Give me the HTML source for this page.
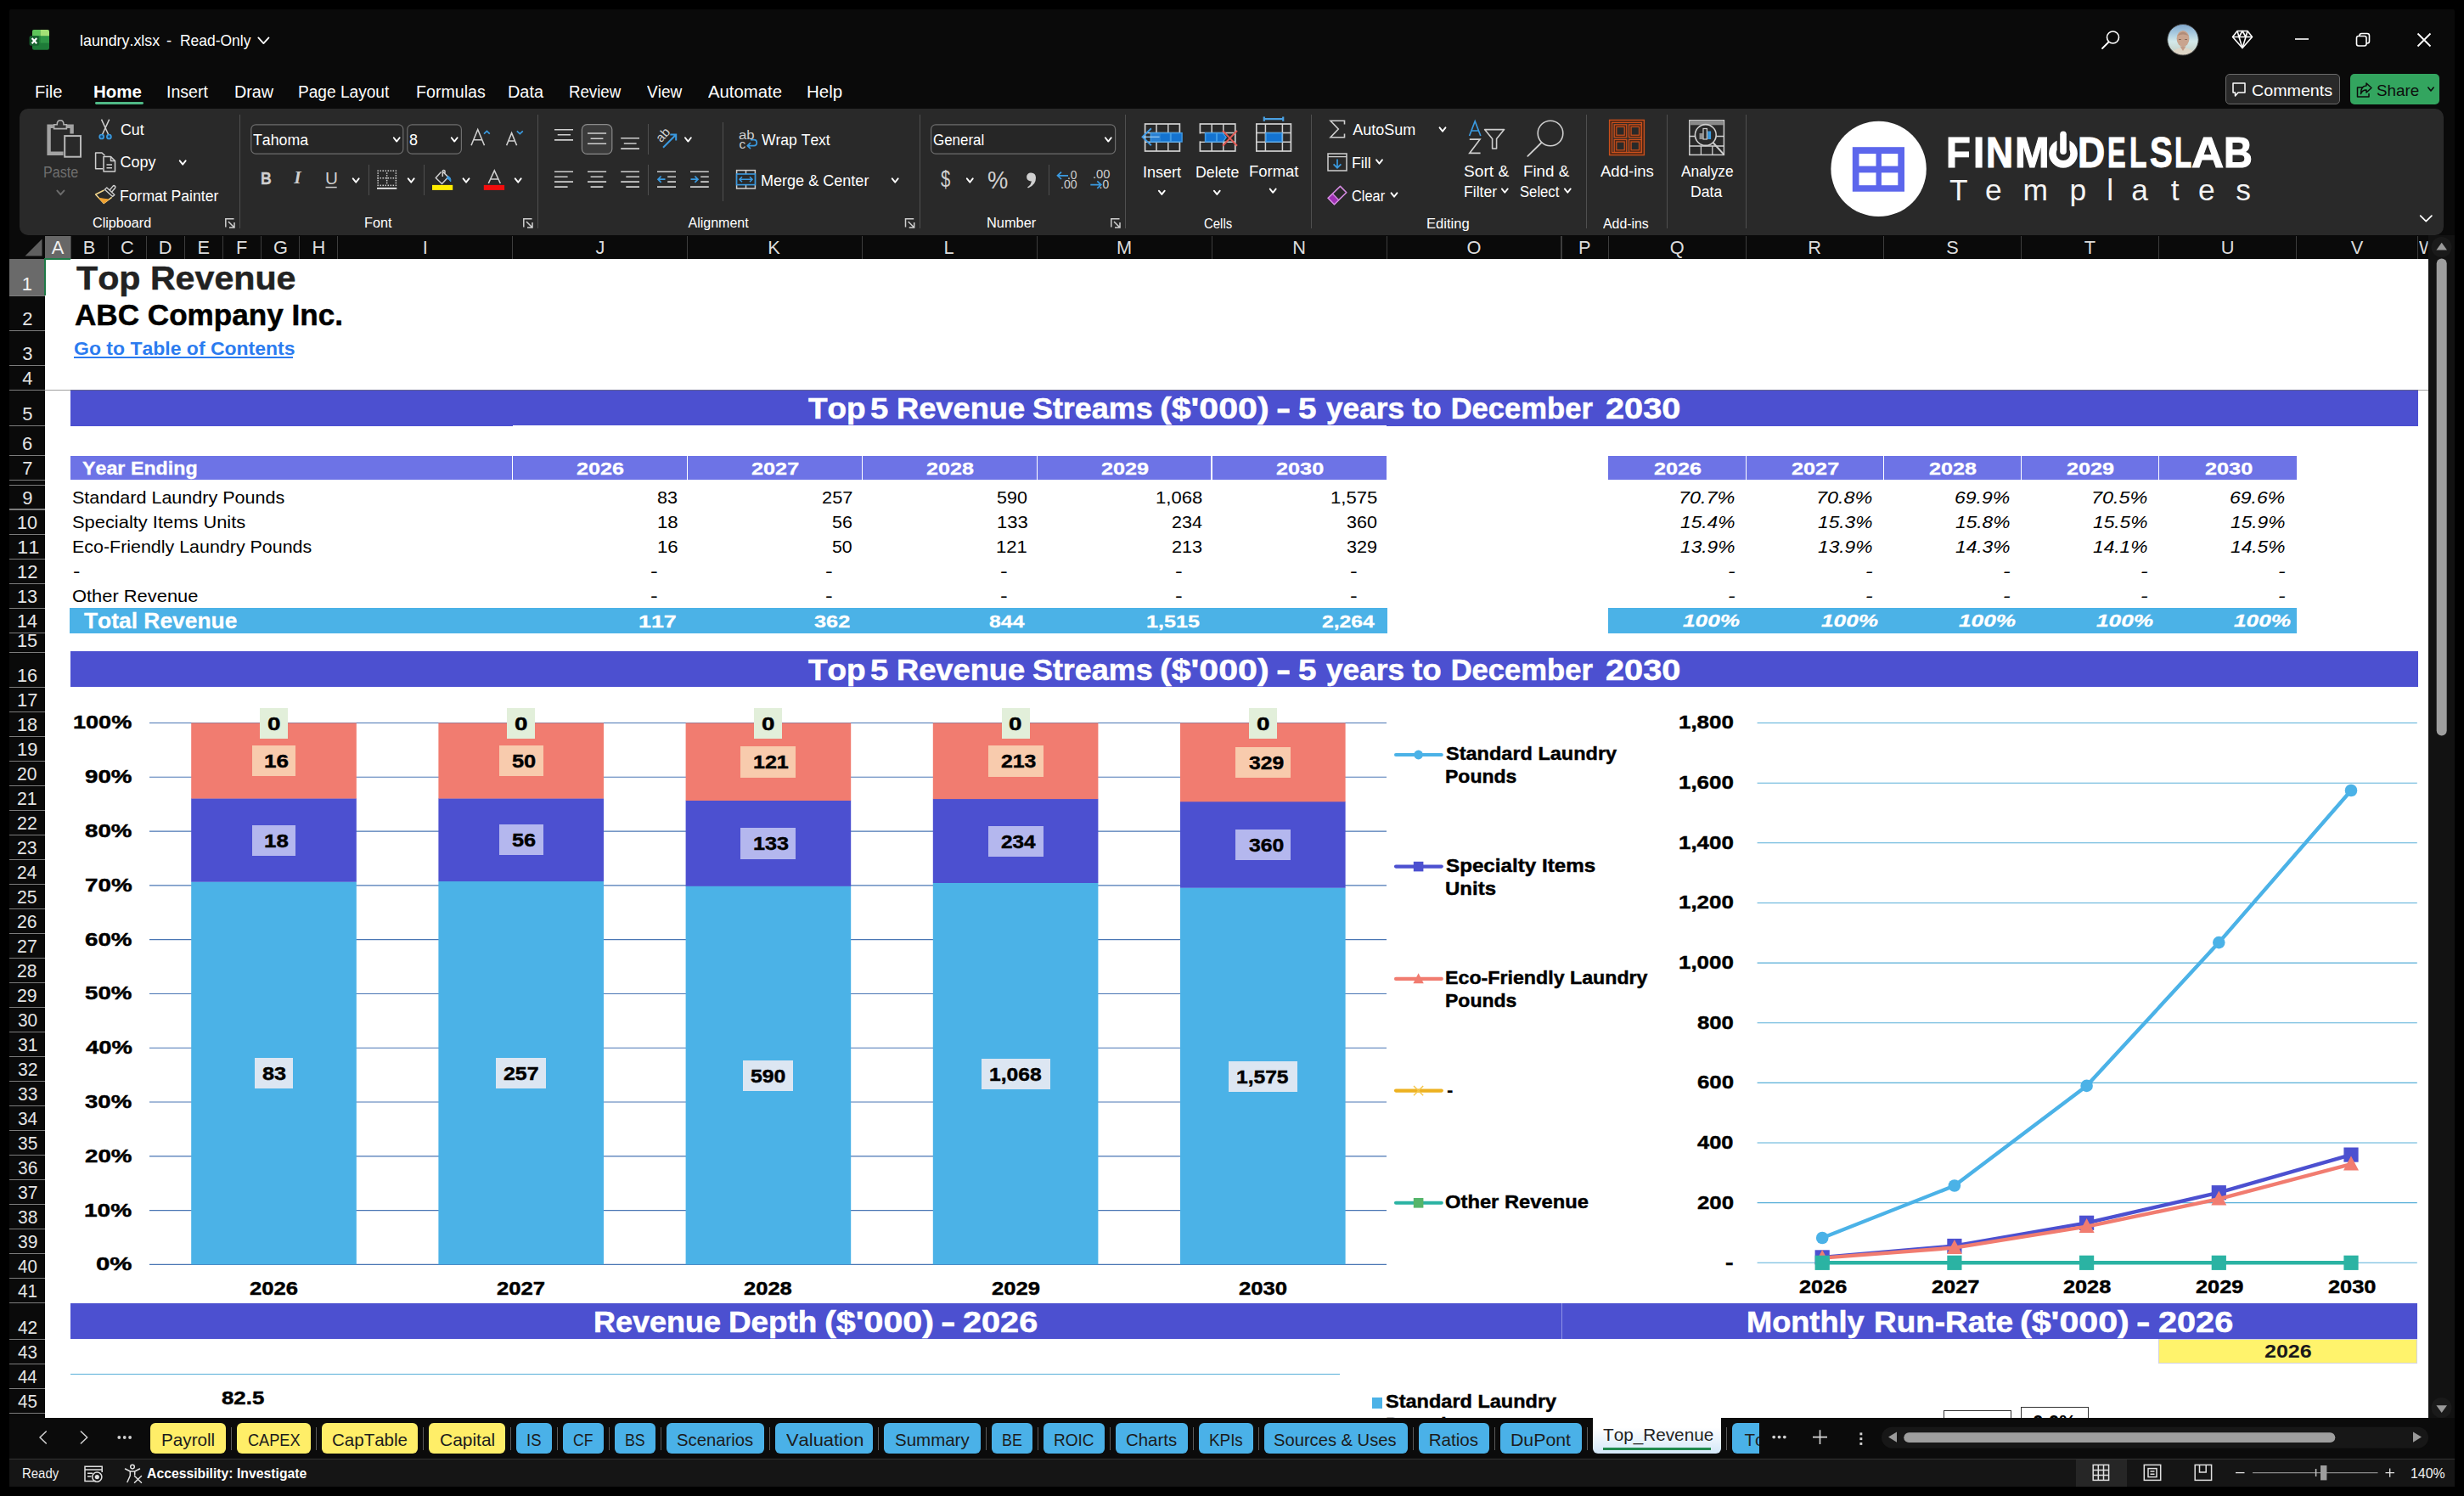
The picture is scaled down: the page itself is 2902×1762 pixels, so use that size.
<!DOCTYPE html>
<html><head><meta charset="utf-8"><title>laundry.xlsx</title>
<style>
html,body{margin:0;padding:0;background:#000;}
body{width:2902px;height:1762px;position:relative;overflow:hidden;font-family:"Liberation Sans",sans-serif;font-kerning:none;}
div,span,svg{position:absolute;}
span{white-space:pre;line-height:1;}
</style></head><body>
<div style="left:11.00px;top:11.00px;width:2880.00px;height:1740.00px;background:#0a0a0a;border-radius:2px;"></div>
<svg width="2902" height="1762" viewBox="0 0 2902 1762" style="left:0;top:0;">
<g>
<rect x="38" y="35" width="20" height="23.8" rx="2.2" fill="#1e7b38"/>
<path d="M40.2 35 L47.5 35 L47.5 42 L38 42 L38 37.2 Q38 35 40.2 35Z" fill="#5ec55a"/>
<path d="M47.5 35 L55.8 35 Q58 35 58 37.2 L58 42.6 L47.5 42.6Z" fill="#a4e076"/>
<rect x="47.5" y="42.6" width="10.5" height="8" fill="#2f9646"/>
<rect x="38" y="42" width="9.5" height="8.6" fill="#278a3e"/>
<rect x="34.6" y="42.2" width="11.6" height="11.6" rx="1.8" fill="#17622e"/>
<path d="M37.6 45 L43.2 51.2 M43.2 45 L37.6 51.2" stroke="#fff" stroke-width="2.1" fill="none"/>
</g></svg>
<span style="left:94.14px;top:39.26px;font-size:18.60px;color:#fff;transform:scaleX(0.9589);transform-origin:0 0;">laundry.xlsx</span>
<span style="left:196.06px;top:39.26px;font-size:18.60px;color:#fff;">-</span>
<span style="left:212.10px;top:39.26px;font-size:18.60px;color:#fff;transform:scaleX(0.9380);transform-origin:0 0;">Read-Only</span>
<svg width="2902" height="1762" viewBox="0 0 2902 1762" style="left:0;top:0;"><path d="M304.30 44.45 L310.40 51.15 L316.50 44.45" fill="none" stroke="#fff" stroke-width="1.8" stroke-linecap="round" stroke-linejoin="round"/></svg>
<svg width="2902" height="1762" viewBox="0 0 2902 1762" style="left:0;top:0;">
<circle cx="2488.5" cy="44" r="7" fill="none" stroke="#fff" stroke-width="1.6"/>
<path d="M2483.5 49.5 L2476 57" stroke="#fff" stroke-width="1.8" stroke-linecap="round"/>
<defs><clipPath id="av"><circle cx="2571" cy="46.8" r="18.3"/></clipPath>
<linearGradient id="avg" x1="0" y1="0" x2="0" y2="1"><stop offset="0" stop-color="#7fa6cc"/><stop offset="0.3" stop-color="#a9cbe0"/><stop offset="0.55" stop-color="#d3e9ea"/><stop offset="0.8" stop-color="#c9d6cf"/><stop offset="1" stop-color="#d9cdbd"/></linearGradient></defs>
<g clip-path="url(#av)">
<rect x="2552" y="28" width="38" height="38" fill="url(#avg)"/>
<ellipse cx="2571" cy="45.5" rx="7.4" ry="9.6" fill="#c9a48e"/>
<path d="M2564.4 42 Q2571 33.5 2577.6 42 Q2571 38.8 2564.4 42Z" fill="#b08c78"/>
<path d="M2566 46.5 L2568.8 46.5 M2573.2 46.5 L2576 46.5" stroke="#7a5c4e" stroke-width="0.9"/>
<path d="M2557 66 Q2559 56 2571 56.5 Q2583 56 2585 66Z" fill="#ded5c6"/>
<path d="M2567.5 54.5 L2571 60 L2574.5 54.5Z" fill="#c29b86"/>
</g>
<circle cx="2571" cy="46.8" r="18.3" fill="none" stroke="#3a3a3a" stroke-width="1"/>
<g fill="none" stroke="#fff" stroke-width="1.6" stroke-linejoin="round">
<path d="M2635 36.5 L2647 36.5 L2652.5 43.5 L2641 56.5 L2629.5 43.5 Z"/>
<path d="M2629.5 43.5 L2652.5 43.5 M2635 36.5 L2637 43.5 L2641 56.5 L2645 43.5 L2647 36.5 M2637 43.5 L2641 36.5 L2645 43.5"/>
</g>
<path d="M2703 46 L2719 46" stroke="#fff" stroke-width="1.6"/>
<rect x="2775.5" y="42.5" width="11.5" height="11.5" rx="2.2" fill="none" stroke="#fff" stroke-width="1.6"/>
<path d="M2779 42.5 L2779 41.8 Q2779 39.5 2781.3 39.5 L2788 39.5 Q2790.5 39.5 2790.5 42 L2790.5 48.5 Q2790.5 51 2788 51 L2787 51" fill="none" stroke="#fff" stroke-width="1.6"/>
<path d="M2847.5 39.5 L2862.5 54.5 M2862.5 39.5 L2847.5 54.5" stroke="#fff" stroke-width="1.8"/>
</svg>
<div style="left:2621.00px;top:87.00px;width:134.60px;height:35.50px;background:#292929;border:1.2px solid #6a6a6a;border-radius:5px;box-sizing:border-box;"></div>
<svg width="2902" height="1762" viewBox="0 0 2902 1762" style="left:0;top:0;"><path d="M2630 98 L2644 98 L2644 109 L2636 109 L2632.5 113 L2632.5 109 L2630 109 Z" fill="none" stroke="#fff" stroke-width="1.5" stroke-linejoin="round"/></svg>
<span style="left:2651.52px;top:98.06px;font-size:18.60px;color:#fff;transform:scaleX(1.0572);transform-origin:0 0;">Comments</span>
<div style="left:2768.20px;top:87.00px;width:104.50px;height:35.50px;background:#33a55f;border-radius:5px;"></div>
<svg width="2902" height="1762" viewBox="0 0 2902 1762" style="left:0;top:0;"><g fill="none" stroke="#0d0d0d" stroke-width="1.5" stroke-linejoin="round" stroke-linecap="round">
<path d="M2782 103 L2776.5 103 L2776.5 114 L2790 114 L2790 110.5"/>
<path d="M2787 98 L2793 103.5 L2787 109 L2787 106 Q2782 106 2780.5 110.5 Q2780.5 101 2787 101 Z"/></g><path d="M2859.80 103.00 L2863.00 107.00 L2866.20 103.00" fill="none" stroke="#0d0d0d" stroke-width="1.6" stroke-linecap="round" stroke-linejoin="round"/></svg>
<span style="left:2798.65px;top:98.06px;font-size:18.60px;color:#0d0d0d;transform:scaleX(1.0126);transform-origin:0 0;">Share</span>
<span style="left:40.58px;top:97.97px;font-size:20.00px;color:#fff;transform:scaleX(1.0101);transform-origin:0 0;">File</span>
<span style="left:110.27px;top:97.97px;font-size:20.00px;color:#fff;transform:scaleX(1.0243);transform-origin:0 0;font-weight:bold;">Home</span>
<span style="left:196.24px;top:97.97px;font-size:20.00px;color:#fff;transform:scaleX(0.9771);transform-origin:0 0;">Insert</span>
<span style="left:275.62px;top:97.97px;font-size:20.00px;color:#fff;transform:scaleX(0.9889);transform-origin:0 0;">Draw</span>
<span style="left:351.47px;top:97.97px;font-size:20.00px;color:#fff;transform:scaleX(0.9548);transform-origin:0 0;">Page Layout</span>
<span style="left:489.93px;top:97.97px;font-size:20.00px;color:#fff;transform:scaleX(0.9803);transform-origin:0 0;">Formulas</span>
<span style="left:598.41px;top:97.97px;font-size:20.00px;color:#fff;transform:scaleX(0.9951);transform-origin:0 0;">Data</span>
<span style="left:669.81px;top:97.97px;font-size:20.00px;color:#fff;transform:scaleX(0.9328);transform-origin:0 0;">Review</span>
<span style="left:761.90px;top:97.97px;font-size:20.00px;color:#fff;transform:scaleX(0.9510);transform-origin:0 0;">View</span>
<span style="left:834.40px;top:97.97px;font-size:20.00px;color:#fff;transform:scaleX(1.0165);transform-origin:0 0;">Automate</span>
<span style="left:949.66px;top:97.97px;font-size:20.00px;color:#fff;transform:scaleX(1.0258);transform-origin:0 0;">Help</span>
<div style="left:111.60px;top:120.30px;width:57.00px;height:2.80px;background:#4fb986;border-radius:1.4px;"></div>
<div style="left:22.60px;top:128.00px;width:2855.60px;height:149.20px;background:#292929;border-radius:10px;"></div>
<svg width="2902" height="1762" viewBox="0 0 2902 1762" style="left:0;top:0;"><g fill="none" stroke="#a2a2a2">
<path d="M62.8 148.8 L57.6 148.8 L57.6 180.7 L74.6 180.7" stroke-width="4.4"/><path d="M78.9 148.8 L84.6 148.8 L84.6 157.6" stroke-width="4.4"/>
<path d="M63.6 151.6 L63.6 146.8 L67.2 146.8 Q67.2 141.8 71.1 141.8 Q75 141.8 75 146.8 L78.4 146.8 L78.4 151.6 Z" stroke-width="1.6" fill="#333" stroke="#b0b0b0"/>
<rect x="76.2" y="160.1" width="18.8" height="24.6" stroke="#b8b8b8" stroke-width="2"/></g><path d="M67.40 224.60 L71.40 229.20 L75.40 224.60" fill="none" stroke="#6c6c6c" stroke-width="2" stroke-linecap="round" stroke-linejoin="round"/><path d="M119.5 140.6 L127.6 158.3 M128.7 140.6 L120.6 158.3" stroke="#cfcfcf" stroke-width="1.5" fill="none"/>
<circle cx="119.7" cy="161" r="2.5" fill="#174a75" stroke="#3a9ae0" stroke-width="1.7"/><circle cx="128.4" cy="161" r="2.5" fill="#174a75" stroke="#3a9ae0" stroke-width="1.7"/><g fill="none" stroke="#cfcfcf" stroke-width="1.5" stroke-linejoin="round"><path d="M121 198.8 L112.6 198.8 L112.6 180 L120 180 L123.5 183.2"/>
<path d="M122 184.5 L130.5 184.5 L135.5 189.5 L135.5 202 L122 202 Z"/><path d="M130.5 184.5 L130.5 189.5 L135.5 189.5"/><path d="M125.5 194 L132 194 M125.5 197.7 L132 197.7"/></g><path d="M211.76 189.35 L215.20 193.65 L218.64 189.35" fill="none" stroke="#fff" stroke-width="1.9" stroke-linecap="round" stroke-linejoin="round"/><path d="M129.6 226 L134.2 220.4" stroke="#cfcfcf" stroke-width="4.8" stroke-linecap="round"/><path d="M129.6 226 L134.2 220.4" stroke="#292929" stroke-width="1.9" stroke-linecap="round"/>
<path d="M123.4 223.3 L125.8 221.1 L134.9 229.4 L132.6 231.6 Z" fill="#292929" stroke="#cfcfcf" stroke-width="1.4" stroke-linejoin="round"/>
<path d="M122.6 224 L112.6 229 L122.3 239.5 L131.7 232.4" fill="none" stroke="#f3d68c" stroke-width="1.5" stroke-linejoin="round"/>
<path d="M116.6 233.4 L128 235 L122.3 239.3 Z" fill="#f0a232" stroke="#f0a232" stroke-width="1" stroke-linejoin="round"/><path d="M275.5 257.8 L265.8 257.8 L265.8 267.5" fill="none" stroke="#cfcfcf" stroke-width="1.5"/><path d="M269 261 L276 268 M276 262 L276 268 L270 268" fill="none" stroke="#cfcfcf" stroke-width="1.5"/><rect x="295.8" y="146.8" width="179" height="34.4" rx="5.5" fill="#262626" stroke="#6e6e6e" stroke-width="1.2"/><rect x="479.8" y="146.8" width="63.6" height="34.4" rx="5.5" fill="#262626" stroke="#6e6e6e" stroke-width="1.2"/><path d="M463.76 162.25 L467.20 166.55 L470.64 162.25" fill="none" stroke="#fff" stroke-width="1.9" stroke-linecap="round" stroke-linejoin="round"/><path d="M531.76 162.25 L535.20 166.55 L538.64 162.25" fill="none" stroke="#fff" stroke-width="1.9" stroke-linecap="round" stroke-linejoin="round"/><path d="M555 171.2 L562.7 152.5 L570.5 171.2 M557.8 164.8 L567.7 164.8" fill="none" stroke="#cfcfcf" stroke-width="1.6"/><path d="M570 157.7 L573.4 154.4 L576.8 157.7" fill="none" stroke="#3a9ae0" stroke-width="1.7"/><path d="M596.6 171.2 L602.6 156.7 L608.6 171.2 M598.8 166 L606.4 166" fill="none" stroke="#cfcfcf" stroke-width="1.6"/><path d="M608.8 154.4 L612.3 157.7 L615.8 154.4" fill="none" stroke="#3a9ae0" stroke-width="1.7"/><path d="M383.5 220.6 L396.7 220.6" stroke="#cfcfcf" stroke-width="1.5"/><path d="M415.76 210.35 L419.20 214.65 L422.64 210.35" fill="none" stroke="#fff" stroke-width="1.9" stroke-linecap="round" stroke-linejoin="round"/><path d="M480.76 210.35 L484.20 214.65 L487.64 210.35" fill="none" stroke="#fff" stroke-width="1.9" stroke-linecap="round" stroke-linejoin="round"/><path d="M545.56 210.35 L549.00 214.65 L552.44 210.35" fill="none" stroke="#fff" stroke-width="1.9" stroke-linecap="round" stroke-linejoin="round"/><path d="M606.76 210.35 L610.20 214.65 L613.64 210.35" fill="none" stroke="#fff" stroke-width="1.9" stroke-linecap="round" stroke-linejoin="round"/><g fill="#cfcfcf"><rect x="444.40" y="200.4" width="1.5" height="1.5"/><rect x="444.40" y="209.0" width="1.5" height="1.5"/><rect x="444.40" y="217.6" width="1.5" height="1.5"/><rect x="447.43" y="200.4" width="1.5" height="1.5"/><rect x="447.43" y="209.0" width="1.5" height="1.5"/><rect x="447.43" y="217.6" width="1.5" height="1.5"/><rect x="450.46" y="200.4" width="1.5" height="1.5"/><rect x="450.46" y="209.0" width="1.5" height="1.5"/><rect x="450.46" y="217.6" width="1.5" height="1.5"/><rect x="453.49" y="200.4" width="1.5" height="1.5"/><rect x="453.49" y="209.0" width="1.5" height="1.5"/><rect x="453.49" y="217.6" width="1.5" height="1.5"/><rect x="456.52" y="200.4" width="1.5" height="1.5"/><rect x="456.52" y="209.0" width="1.5" height="1.5"/><rect x="456.52" y="217.6" width="1.5" height="1.5"/><rect x="459.55" y="200.4" width="1.5" height="1.5"/><rect x="459.55" y="209.0" width="1.5" height="1.5"/><rect x="459.55" y="217.6" width="1.5" height="1.5"/><rect x="462.58" y="200.4" width="1.5" height="1.5"/><rect x="462.58" y="209.0" width="1.5" height="1.5"/><rect x="462.58" y="217.6" width="1.5" height="1.5"/><rect x="465.61" y="200.4" width="1.5" height="1.5"/><rect x="465.61" y="209.0" width="1.5" height="1.5"/><rect x="465.61" y="217.6" width="1.5" height="1.5"/><rect x="444.4" y="203.27" width="1.5" height="1.5"/><rect x="454.9" y="203.27" width="1.5" height="1.5"/><rect x="465.6" y="203.27" width="1.5" height="1.5"/><rect x="444.4" y="206.14" width="1.5" height="1.5"/><rect x="454.9" y="206.14" width="1.5" height="1.5"/><rect x="465.6" y="206.14" width="1.5" height="1.5"/><rect x="444.4" y="209.01" width="1.5" height="1.5"/><rect x="454.9" y="209.01" width="1.5" height="1.5"/><rect x="465.6" y="209.01" width="1.5" height="1.5"/><rect x="444.4" y="211.88" width="1.5" height="1.5"/><rect x="454.9" y="211.88" width="1.5" height="1.5"/><rect x="465.6" y="211.88" width="1.5" height="1.5"/><rect x="444.4" y="214.75" width="1.5" height="1.5"/><rect x="454.9" y="214.75" width="1.5" height="1.5"/><rect x="465.6" y="214.75" width="1.5" height="1.5"/></g><rect x="444" y="220.9" width="23.3" height="1.9" fill="#e6e6e6"/><path d="M519.5 202.5 L513.2 209.5 L520.5 216.5 L528 208.6 L521.5 202.2 M521.3 208 L521.3 201.3 Q522.5 199.5 524 201.3 L524 204.5" fill="none" stroke="#cfcfcf" stroke-width="1.5" stroke-linejoin="round"/>
<path d="M527.3 207.5 Q531.5 208.5 530.8 214 Q529 211 526.5 210.2 Z" fill="#3a9ae0" stroke="#3a9ae0" stroke-width="1"/>
<rect x="509" y="217.9" width="24.2" height="6" fill="#ffed00"/><path d="M575.3 216 L582.3 201 L589.3 216 M577.8 211 L586.8 211" fill="none" stroke="#cfcfcf" stroke-width="1.6"/><rect x="569.8" y="217.9" width="24.3" height="6" fill="#f20d0d"/><path d="M626.5 257.8 L616.8 257.8 L616.8 267.5" fill="none" stroke="#cfcfcf" stroke-width="1.5"/><path d="M620 261 L627 268 M627 262 L627 268 L621 268" fill="none" stroke="#cfcfcf" stroke-width="1.5"/><path d="M653.0 152.8 L675.0 152.8 M656.7 158.8 L672.0 158.8 M653.0 164.9 L675.0 164.9 " stroke="#cfcfcf" stroke-width="1.6" fill="none"/><rect x="685.4" y="146.6" width="35.4" height="34.8" rx="6" fill="#3b3b3b" stroke="#8a8a8a" stroke-width="1.2"/><path d="M692.0 157.0 L714.1 157.0 M695.6 163.2 L710.4 163.2 M692.0 169.3 L714.1 169.3 " stroke="#cfcfcf" stroke-width="1.6" fill="none"/><path d="M731.2 162.8 L753.0 162.8 M734.8 169.0 L749.6 169.0 M731.2 175.1 L753.0 175.1 " stroke="#cfcfcf" stroke-width="1.6" fill="none"/><path d="M653.0 202.2 L675.0 202.2 M653.0 208.2 L668.6 208.2 M653.0 214.1 L675.0 214.1 M653.0 220.1 L668.6 220.1 " stroke="#cfcfcf" stroke-width="1.6" fill="none"/><path d="M692.0 202.2 L714.1 202.2 M695.6 208.2 L710.4 208.2 M692.0 214.1 L714.1 214.1 M695.6 220.1 L710.4 220.1 " stroke="#cfcfcf" stroke-width="1.6" fill="none"/><path d="M731.2 202.2 L753.0 202.2 M737.3 208.2 L753.0 208.2 M731.2 214.1 L753.0 214.1 M737.3 220.1 L753.0 220.1 " stroke="#cfcfcf" stroke-width="1.6" fill="none"/><path d="M774.0 202.2 L796.0 202.2 M786.2 208.2 L796.0 208.2 M786.2 214.1 L796.0 214.1 M774.0 220.1 L796.0 220.1 " stroke="#cfcfcf" stroke-width="1.6" fill="none"/><path d="M783.5 211.2 L775 211.2 M778.6 207.5 L775 211.2 L778.6 214.9" fill="none" stroke="#3a9ae0" stroke-width="1.7"/><path d="M813.0 202.2 L834.8 202.2 M825.2 208.2 L834.8 208.2 M825.2 214.1 L834.8 214.1 M813.0 220.1 L834.8 220.1 " stroke="#cfcfcf" stroke-width="1.6" fill="none"/><path d="M813.5 211.2 L822 211.2 M818.4 207.5 L822 211.2 L818.4 214.9" fill="none" stroke="#3a9ae0" stroke-width="1.7"/><path d="M781 173.8 L796 158.8 M789.3 158.6 L796.2 158.6 L796.2 165.5" fill="none" stroke="#3a9ae0" stroke-width="2"/><path d="M806.96 162.25 L810.40 166.55 L813.84 162.25" fill="none" stroke="#fff" stroke-width="1.9" stroke-linecap="round" stroke-linejoin="round"/><path d="M884 164.6 L888.2 164.6 Q891.3 164.6 891.3 168 Q891.3 171.6 888 171.6 L880.5 171.6 M884 168 L880.3 171.6 L884 175.2" fill="none" stroke="#3a9ae0" stroke-width="1.7" stroke-linejoin="round"/><rect x="867.6" y="200.6" width="21.8" height="21.4" fill="none" stroke="#cfcfcf" stroke-width="1.5"/>
<path d="M878.5 200.6 L878.5 205 M878.5 217.6 L878.5 222" stroke="#cfcfcf" stroke-width="1.5"/>
<rect x="867.6" y="205" width="21.8" height="12.6" fill="#292929" stroke="#3a9ae0" stroke-width="1.6"/>
<path d="M871 211.3 L886 211.3 M874 208.3 L871 211.3 L874 214.3 M883 208.3 L886 211.3 L883 214.3" fill="none" stroke="#3a9ae0" stroke-width="1.6"/><path d="M1050.76 210.35 L1054.20 214.65 L1057.64 210.35" fill="none" stroke="#fff" stroke-width="1.9" stroke-linecap="round" stroke-linejoin="round"/><path d="M1076.2 257.8 L1066.5 257.8 L1066.5 267.5" fill="none" stroke="#cfcfcf" stroke-width="1.5"/><path d="M1069.7 261 L1076.7 268 M1076.7 262 L1076.7 268 L1070.7 268" fill="none" stroke="#cfcfcf" stroke-width="1.5"/><rect x="1096.6" y="146.8" width="217" height="34.4" rx="5.5" fill="#262626" stroke="#6e6e6e" stroke-width="1.2"/><path d="M1301.86 162.25 L1305.30 166.55 L1308.74 162.25" fill="none" stroke="#fff" stroke-width="1.9" stroke-linecap="round" stroke-linejoin="round"/><path d="M1138.86 210.35 L1142.30 214.65 L1145.74 210.35" fill="none" stroke="#fff" stroke-width="1.9" stroke-linecap="round" stroke-linejoin="round"/><path d="M1258 206.8 L1245.5 206.8 M1250 202.6 L1245.5 206.8 L1250 211" fill="none" stroke="#3a9ae0" stroke-width="1.7"/><path d="M1284.3 217.6 L1296.8 217.6 M1292.3 213.4 L1296.8 217.6 L1292.3 221.8" fill="none" stroke="#3a9ae0" stroke-width="1.7"/><path d="M1318.5 257.8 L1308.8 257.8 L1308.8 267.5" fill="none" stroke="#cfcfcf" stroke-width="1.5"/><path d="M1312 261 L1319 268 M1319 262 L1319 268 L1313 268" fill="none" stroke="#cfcfcf" stroke-width="1.5"/><path d="M1214.5 203.6 a4.9 4.9 0 1 0 0.3 9.7 Q1214.5 218 1210 220.5 L1211 221.6 Q1220.3 217.6 1220 209.3 Q1219.7 203.8 1214.5 203.6 Z" fill="#cfcfcf"/></svg>
<div style="left:281.90px;top:135.00px;width:1.30px;height:133.50px;background:#4f4f4f;"></div>
<div style="left:633.10px;top:135.00px;width:1.30px;height:133.50px;background:#4f4f4f;"></div>
<div style="left:1082.60px;top:135.00px;width:1.30px;height:133.50px;background:#4f4f4f;"></div>
<div style="left:1325.10px;top:135.00px;width:1.30px;height:133.50px;background:#4f4f4f;"></div>
<div style="left:1543.80px;top:135.00px;width:1.30px;height:133.50px;background:#4f4f4f;"></div>
<div style="left:1867.90px;top:135.00px;width:1.30px;height:133.50px;background:#4f4f4f;"></div>
<div style="left:1963.00px;top:135.00px;width:1.30px;height:133.50px;background:#4f4f4f;"></div>
<div style="left:2055.90px;top:135.00px;width:1.30px;height:133.50px;background:#4f4f4f;"></div>
<div style="left:433.90px;top:194.00px;width:1.30px;height:35.80px;background:#4f4f4f;"></div>
<div style="left:498.90px;top:194.00px;width:1.30px;height:35.80px;background:#4f4f4f;"></div>
<div style="left:763.00px;top:146.30px;width:1.30px;height:35.30px;background:#4f4f4f;"></div>
<div style="left:763.00px;top:194.00px;width:1.30px;height:35.80px;background:#4f4f4f;"></div>
<div style="left:850.80px;top:143.70px;width:1.30px;height:93.80px;background:#4f4f4f;"></div>
<div style="left:1234.90px;top:194.00px;width:1.30px;height:35.80px;background:#4f4f4f;"></div>
<span style="left:51.11px;top:194.70px;font-size:17.60px;color:#6e6e6e;transform:scaleX(0.9189);transform-origin:0 0;">Paste</span>
<span style="left:141.51px;top:143.56px;font-size:18.00px;color:#fff;transform:scaleX(0.9889);transform-origin:0 0;">Cut</span>
<span style="left:141.50px;top:182.36px;font-size:18.00px;color:#fff;">Copy</span>
<span style="left:141.29px;top:221.56px;font-size:18.00px;color:#fff;transform:scaleX(0.9772);transform-origin:0 0;">Format Painter</span>
<span style="left:108.69px;top:254.76px;font-size:16.00px;color:#fff;transform:scaleX(1.0099);transform-origin:0 0;">Clipboard</span>
<span style="left:428.70px;top:254.76px;font-size:16.00px;color:#fff;transform:scaleX(1.0117);transform-origin:0 0;">Font</span>
<span style="left:810.50px;top:254.76px;font-size:16.00px;color:#fff;">Alignment</span>
<span style="left:1162.29px;top:254.76px;font-size:16.00px;color:#fff;transform:scaleX(1.0224);transform-origin:0 0;">Number</span>
<span style="left:1417.55px;top:255.66px;font-size:16.00px;color:#fff;transform:scaleX(0.9346);transform-origin:0 0;">Cells</span>
<span style="left:1680.47px;top:255.66px;font-size:16.00px;color:#fff;transform:scaleX(1.0352);transform-origin:0 0;">Editing</span>
<span style="left:1888.20px;top:255.66px;font-size:16.00px;color:#fff;transform:scaleX(0.9911);transform-origin:0 0;">Add-ins</span>
<span style="left:298.35px;top:155.56px;font-size:18.00px;color:#fff;transform:scaleX(0.9854);transform-origin:0 0;">Tahoma</span>
<span style="left:481.99px;top:155.56px;font-size:18.00px;color:#fff;">8</span>
<span style="left:306.65px;top:200.33px;font-size:20.40px;color:#cfcfcf;transform:scaleX(0.8679);transform-origin:0 0;font-weight:bold;-webkit-text-stroke:0.3px #cfcfcf;">B</span>
<span style="left:346.2px;top:199.3px;font-size:21.5px;color:#cfcfcf;font-style:italic;font-weight:bold;font-family:'Liberation Serif',serif;">I</span>
<span style="left:382.65px;top:200.58px;font-size:19.40px;color:#cfcfcf;transform:scaleX(1.0671);transform-origin:0 0;">U</span>
<span style="left:-0.60px;top:-12.70px;font-size:15.00px;color:#cfcfcf;left:771.6px;top:151.4px;transform:rotate(-48deg);transform-origin:50% 50%;">ab</span>
<span style="left:870.13px;top:150.88px;font-size:15.50px;color:#cfcfcf;transform:scaleX(1.0836);transform-origin:0 0;">ab</span>
<span style="left:870.38px;top:162.28px;font-size:15.50px;color:#cfcfcf;">c</span>
<span style="left:897.31px;top:155.56px;font-size:18.00px;color:#fff;transform:scaleX(0.9725);transform-origin:0 0;">Wrap Text</span>
<span style="left:895.96px;top:203.56px;font-size:18.00px;color:#fff;transform:scaleX(1.0026);transform-origin:0 0;">Merge &amp; Center</span>
<span style="left:1098.55px;top:155.56px;font-size:18.00px;color:#fff;transform:scaleX(0.9415);transform-origin:0 0;">General</span>
<span style="left:1107.60px;top:197.30px;font-size:28.00px;color:#cfcfcf;transform:scaleX(0.7278);transform-origin:0 0;">$</span>
<span style="left:1162.64px;top:197.95px;font-size:29.00px;color:#cfcfcf;transform:scaleX(0.9420);transform-origin:0 0;">%</span>
<span style="left:1256.96px;top:199.92px;font-size:13.80px;color:#cfcfcf;">.0</span>
<span style="left:1249.23px;top:211.12px;font-size:13.80px;color:#cfcfcf;transform:scaleX(1.0196);transform-origin:0 0;">.00</span>
<span style="left:1286.68px;top:198.82px;font-size:13.80px;color:#cfcfcf;transform:scaleX(1.0655);transform-origin:0 0;">.00</span>
<span style="left:1294.56px;top:211.12px;font-size:13.80px;color:#cfcfcf;">.0</span>
<span style="left:1345.98px;top:194.46px;font-size:18.00px;color:#fff;transform:scaleX(1.0025);transform-origin:0 0;">Insert</span>
<span style="left:1408.38px;top:194.46px;font-size:18.00px;color:#fff;transform:scaleX(0.9865);transform-origin:0 0;">Delete</span>
<span style="left:1471.02px;top:192.96px;font-size:18.00px;color:#fff;transform:scaleX(1.0263);transform-origin:0 0;">Format</span>
<span style="left:1593.30px;top:143.96px;font-size:18.00px;color:#fff;">AutoSum</span>
<span style="left:1591.88px;top:182.86px;font-size:18.00px;color:#fff;transform:scaleX(0.9882);transform-origin:0 0;">Fill</span>
<span style="left:1592.48px;top:221.56px;font-size:18.00px;color:#fff;transform:scaleX(0.9100);transform-origin:0 0;">Clear</span>
<span style="left:1724.44px;top:192.96px;font-size:18.00px;color:#fff;transform:scaleX(1.0640);transform-origin:0 0;">Sort &amp;</span>
<span style="left:1723.59px;top:216.76px;font-size:18.00px;color:#fff;transform:scaleX(0.9778);transform-origin:0 0;">Filter</span>
<span style="left:1793.80px;top:192.96px;font-size:18.00px;color:#fff;transform:scaleX(1.0415);transform-origin:0 0;">Find &amp;</span>
<span style="left:1789.85px;top:216.76px;font-size:18.00px;color:#fff;transform:scaleX(0.9256);transform-origin:0 0;">Select</span>
<span style="left:1885.20px;top:192.96px;font-size:18.00px;color:#fff;transform:scaleX(1.0300);transform-origin:0 0;">Add-ins</span>
<span style="left:1980.30px;top:192.96px;font-size:18.00px;color:#fff;transform:scaleX(0.9623);transform-origin:0 0;">Analyze</span>
<span style="left:1991.09px;top:216.76px;font-size:18.00px;color:#fff;transform:scaleX(0.9797);transform-origin:0 0;">Data</span>
<svg width="2902" height="1762" viewBox="0 0 2902 1762" style="left:0;top:0;"><path d="M1364.86 224.65 L1368.30 228.95 L1371.74 224.65" fill="none" stroke="#fff" stroke-width="1.9" stroke-linecap="round" stroke-linejoin="round"/><path d="M1429.86 224.65 L1433.30 228.95 L1436.74 224.65" fill="none" stroke="#fff" stroke-width="1.9" stroke-linecap="round" stroke-linejoin="round"/><path d="M1495.76 222.55 L1499.20 226.85 L1502.64 222.55" fill="none" stroke="#fff" stroke-width="1.9" stroke-linecap="round" stroke-linejoin="round"/><path d="M1695.56 150.35 L1699.00 154.65 L1702.44 150.35" fill="none" stroke="#fff" stroke-width="1.9" stroke-linecap="round" stroke-linejoin="round"/><path d="M1621.06 188.35 L1624.50 192.65 L1627.94 188.35" fill="none" stroke="#fff" stroke-width="1.9" stroke-linecap="round" stroke-linejoin="round"/><path d="M1638.56 227.35 L1642.00 231.65 L1645.44 227.35" fill="none" stroke="#fff" stroke-width="1.9" stroke-linecap="round" stroke-linejoin="round"/><path d="M1768.86 222.45 L1772.30 226.75 L1775.74 222.45" fill="none" stroke="#fff" stroke-width="1.9" stroke-linecap="round" stroke-linejoin="round"/><path d="M1842.86 222.45 L1846.30 226.75 L1849.74 222.45" fill="none" stroke="#fff" stroke-width="1.9" stroke-linecap="round" stroke-linejoin="round"/><rect x="1348.6" y="146" width="40.80000000000018" height="32" fill="none" stroke="#d2d2d2" stroke-width="1.7"/><path d="M1362 146 L1362 178 M1375.8 146 L1375.8 178 M1348.6 156.6 L1389.4 156.6 M1348.6 167.2 L1389.4 167.2 " stroke="#d2d2d2" stroke-width="1.5" fill="none"/><rect x="1354.6" y="155.9" width="38.2" height="11.8" fill="#3f9ae5"/><rect x="1366.4" y="157.4" width="11.4" height="8.8" fill="#1473d0"/><rect x="1379.8" y="157.4" width="11.6" height="8.8" fill="#1473d0"/><rect x="1356" y="157.4" width="10.4" height="8.8" fill="#2a7fd0"/><path d="M1355.9 151.2 L1345.5 161.3 L1355.9 171.2" fill="none" stroke="#3f9ae5" stroke-width="1.9" stroke-linejoin="miter"/><path d="M1346.5 161.3 L1365.6 161.3" stroke="#8cc4f2" stroke-width="1.4"/><rect x="1413.4" y="146" width="41.399999999999864" height="32" fill="none" stroke="#d2d2d2" stroke-width="1.7"/><path d="M1427.2 146 L1427.2 178 M1440.8 146 L1440.8 178 M1413.4 156.6 L1454.8 156.6 M1413.4 167.2 L1454.8 167.2 " stroke="#d2d2d2" stroke-width="1.5" fill="none"/><rect x="1412" y="157.5" width="8" height="8.8" fill="#292929"/><rect x="1418.8" y="155.9" width="22" height="11.8" fill="#3f9ae5"/><path d="M1440.7 155.9 L1445 161.8 L1440.7 167.7 Z" fill="#3f9ae5"/><rect x="1420.4" y="157.4" width="11.6" height="8.8" fill="#1473d0"/><path d="M1434 157.4 L1440 157.4 L1443.2 161.8 L1440 166.2 L1434 166.2 Z" fill="#1473d0"/><path d="M1440 153.9 L1457 171.7 M1457 153.9 L1440 171.7" stroke="#e25b55" stroke-width="2" fill="none"/><rect x="1479.8" y="146" width="40.600000000000136" height="32" fill="none" stroke="#d2d2d2" stroke-width="1.7"/><path d="M1490.4 146 L1490.4 178 M1510.4 146 L1510.4 178 M1479.8 156.6 L1520.4 156.6 M1479.8 167.2 L1520.4 167.2 " stroke="#d2d2d2" stroke-width="1.5" fill="none"/><rect x="1490.2" y="155.9" width="20.4" height="11.8" fill="#3f9ae5"/><rect x="1491.8" y="157.4" width="17.2" height="8.8" fill="#1473d0"/><path d="M1488.4 140.2 L1511.6 140.2 M1488.8 137.6 L1488.8 142.8 M1511.2 137.6 L1511.2 142.8" stroke="#4aa0e2" stroke-width="2.2" fill="none"/><path d="M1583.5 146.5 L1583.5 142.2 L1567 142.2 L1576.3 152 L1567 161.8 L1583.5 161.8 L1583.5 157.5" fill="none" stroke="#cfcfcf" stroke-width="1.6" stroke-linejoin="miter"/><rect x="1564" y="181" width="22" height="20" fill="none" stroke="#cfcfcf" stroke-width="1.5"/><path d="M1564 184.6 L1586 184.6" stroke="#cfcfcf" stroke-width="1.3"/><path d="M1575 187.5 L1575 197.5 M1570.6 193.3 L1575 197.7 L1579.4 193.3" fill="none" stroke="#3a9ae0" stroke-width="1.7"/><path d="M1578.5 219.4 L1585.8 226.7 L1571.5 240.6 L1564.2 233.3 Z" fill="none" stroke="#d48ae0" stroke-width="1.6" stroke-linejoin="round"/><path d="M1569.5 228.3 L1576.6 235.6 L1571.5 240.6 L1564.2 233.3 Z" fill="#9f30b4" stroke="#d48ae0" stroke-width="1.3"/><path d="M1730.6 160 L1737.2 142.8 L1743.8 160 M1732.9 154 L1741.5 154" fill="none" stroke="#3a9ae0" stroke-width="1.7"/><path d="M1730.8 164.2 L1743 164.2 L1730.8 180.4 L1743.6 180.4" fill="none" stroke="#cfcfcf" stroke-width="1.7"/><path d="M1748.6 152.6 L1771.6 152.6 L1762.6 163.4 L1762.6 175 L1757.6 175 L1757.6 163.4 Z" fill="none" stroke="#cfcfcf" stroke-width="1.6" stroke-linejoin="round"/><circle cx="1826" cy="157" r="14.8" fill="none" stroke="#cfcfcf" stroke-width="1.6"/><path d="M1815.5 168 L1799.3 183.8" stroke="#cfcfcf" stroke-width="1.8" stroke-linecap="round"/><rect x="1895.6" y="141.4" width="40.8" height="41.2" fill="#4a2416" stroke="#c9501c" stroke-width="1.4"/><rect x="1898.6" y="144.4" width="34.8" height="35.2" fill="#292929" stroke="#c9501c" stroke-width="1.3"/><rect x="1901.2" y="146.8" width="14.6" height="15" fill="#4a2416" stroke="#c9501c" stroke-width="1.3"/><rect x="1903.8" y="149.4" width="9.4" height="9.8" fill="#292929" stroke="#c9501c" stroke-width="1.2"/><rect x="1918.5" y="146.8" width="14.6" height="15" fill="#4a2416" stroke="#c9501c" stroke-width="1.3"/><rect x="1921.1" y="149.4" width="9.4" height="9.8" fill="#292929" stroke="#c9501c" stroke-width="1.2"/><rect x="1901.2" y="164.4" width="14.6" height="15" fill="#4a2416" stroke="#c9501c" stroke-width="1.3"/><rect x="1903.8" y="167.0" width="9.4" height="9.8" fill="#292929" stroke="#c9501c" stroke-width="1.2"/><rect x="1918.5" y="164.4" width="14.6" height="15" fill="#4a2416" stroke="#c9501c" stroke-width="1.3"/><rect x="1921.1" y="167.0" width="9.4" height="9.8" fill="#292929" stroke="#c9501c" stroke-width="1.2"/><rect x="1989.8" y="141.8" width="40.6" height="40.6" fill="none" stroke="#cfcfcf" stroke-width="1.5"/>
<rect x="1990.5" y="142.5" width="39.2" height="4.8" fill="#8a8a8a"/>
<path d="M1989.8 160.5 L2030.4 160.5 M1989.8 172 L2030.4 172 M2003.4 172 L2003.4 182.4 M2016.8 172 L2016.8 182.4" stroke="#cfcfcf" stroke-width="1.3"/>
<circle cx="2008.8" cy="159" r="12.4" fill="#292929" stroke="#cfcfcf" stroke-width="1.6"/>
<rect x="2001.5" y="157" width="4" height="7" fill="#8f8f8f"/><rect x="2006" y="151.5" width="4.4" height="12.5" fill="none" stroke="#cfcfcf" stroke-width="1.2"/><rect x="2011.3" y="154.5" width="3.8" height="9.5" fill="#3a9ae0"/>
<path d="M2017.6 168 L2030 181.6" stroke="#cfcfcf" stroke-width="2"/><path d="M2850.70 254.10 L2857.30 260.70 L2863.90 254.10" fill="none" stroke="#fff" stroke-width="1.7" stroke-linecap="round" stroke-linejoin="round"/><circle cx="2212.6" cy="198.9" r="56.2" fill="#fff"/><rect x="2181.8" y="173.2" width="61.2" height="52.5" fill="#5c66ec"/>
<rect x="2189.5" y="181.1" width="20" height="14.5" fill="#fff"/><rect x="2215.9" y="181.1" width="19.4" height="14.5" fill="#fff"/>
<rect x="2189.5" y="203.4" width="20" height="14.8" fill="#fff"/><rect x="2215.9" y="203.4" width="19.4" height="14.8" fill="#fff"/></svg>
<span style="left:2292.24px;top:155.81px;font-size:49.60px;color:#fff;transform:scaleX(0.9488);transform-origin:0 0;font-weight:bold;-webkit-text-stroke:1.1px #fff;">F</span>
<span style="left:2324.01px;top:155.81px;font-size:49.60px;color:#fff;transform:scaleX(0.9594);transform-origin:0 0;font-weight:bold;-webkit-text-stroke:1.1px #fff;">I</span>
<span style="left:2339.01px;top:155.81px;font-size:49.60px;color:#fff;transform:scaleX(0.8953);transform-origin:0 0;font-weight:bold;-webkit-text-stroke:1.1px #fff;">N</span>
<span style="left:2372.82px;top:155.81px;font-size:49.60px;color:#fff;transform:scaleX(0.9850);transform-origin:0 0;font-weight:bold;-webkit-text-stroke:1.1px #fff;">M</span>
<span style="left:2446.90px;top:155.81px;font-size:49.60px;color:#fff;transform:scaleX(0.8982);transform-origin:0 0;font-weight:bold;-webkit-text-stroke:1.1px #fff;">D</span>
<span style="left:2481.79px;top:155.81px;font-size:49.60px;color:#fff;transform:scaleX(0.6530);transform-origin:0 0;font-weight:bold;-webkit-text-stroke:1.1px #fff;">E</span>
<span style="left:2507.83px;top:155.81px;font-size:49.60px;color:#fff;transform:scaleX(0.6733);transform-origin:0 0;font-weight:bold;-webkit-text-stroke:1.1px #fff;">L</span>
<span style="left:2531.60px;top:155.81px;font-size:49.60px;color:#fff;transform:scaleX(0.8065);transform-origin:0 0;font-weight:bold;-webkit-text-stroke:1.1px #fff;">S</span>
<span style="left:2561.34px;top:155.81px;font-size:49.60px;color:#fff;transform:scaleX(0.6694);transform-origin:0 0;font-weight:bold;-webkit-text-stroke:1.1px #fff;">L</span>
<span style="left:2581.48px;top:155.81px;font-size:49.60px;color:#fff;transform:scaleX(1.0622);transform-origin:0 0;font-weight:bold;-webkit-text-stroke:1.1px #fff;">A</span>
<span style="left:2619.45px;top:155.81px;font-size:49.60px;color:#fff;transform:scaleX(0.9453);transform-origin:0 0;font-weight:bold;-webkit-text-stroke:1.1px #fff;">B</span>
<svg width="2902" height="1762" viewBox="0 0 2902 1762" style="left:0;top:0;"><circle cx="2430" cy="180.8" r="12.6" fill="none" stroke="#fff" stroke-width="8.6"/><rect x="2422.6" y="157" width="14.8" height="25.6" fill="#292929"/><rect x="2426.2" y="154.4" width="7.6" height="27.6" rx="3.8" fill="#fff"/></svg>
<span style="left:2295.90px;top:207.03px;font-size:35.40px;color:#f4f4f4;">T</span>
<span style="left:2337.91px;top:207.03px;font-size:35.40px;color:#f4f4f4;">e</span>
<span style="left:2382.62px;top:207.03px;font-size:35.40px;color:#f4f4f4;">m</span>
<span style="left:2437.38px;top:207.03px;font-size:35.40px;color:#f4f4f4;">p</span>
<span style="left:2481.21px;top:207.03px;font-size:35.40px;color:#f4f4f4;">l</span>
<span style="left:2510.37px;top:207.03px;font-size:35.40px;color:#f4f4f4;">a</span>
<span style="left:2556.81px;top:207.03px;font-size:35.40px;color:#f4f4f4;">t</span>
<span style="left:2588.96px;top:207.03px;font-size:35.40px;color:#f4f4f4;">e</span>
<span style="left:2633.19px;top:207.03px;font-size:35.40px;color:#f4f4f4;">s</span>
<div style="left:53.00px;top:305.00px;width:2807.00px;height:1365.00px;background:#fff;"></div>
<div style="left:2860.00px;top:277.00px;width:31.00px;height:1393.00px;background:#121212;"></div>
<div style="left:11.00px;top:277.50px;width:2849.00px;height:27.60px;background:#0a0a0a;"></div>
<div style="left:53.00px;top:278.00px;width:30.20px;height:27.20px;background:#676767;"></div>
<svg width="2902" height="1762" viewBox="0 0 2902 1762" style="left:0;top:0;"><path d="M49.5 281.5 L49.5 301.5 L29.5 301.5 Z" fill="#5f5f5f"/></svg>
<div style="left:82.60px;top:278.00px;width:1.20px;height:27.00px;background:#3d3d3d;"></div>
<span style="left:60.85px;top:281.15px;font-size:21.80px;color:#f0f0f0;">A</span>
<div style="left:126.80px;top:278.00px;width:1.20px;height:27.00px;background:#3d3d3d;"></div>
<span style="left:97.72px;top:281.15px;font-size:21.80px;color:#dcdcdc;">B</span>
<div style="left:171.90px;top:278.00px;width:1.20px;height:27.00px;background:#3d3d3d;"></div>
<span style="left:141.94px;top:281.15px;font-size:21.80px;color:#dcdcdc;">C</span>
<div style="left:217.00px;top:278.00px;width:1.20px;height:27.00px;background:#3d3d3d;"></div>
<span style="left:186.82px;top:281.15px;font-size:21.80px;color:#dcdcdc;">D</span>
<div style="left:262.10px;top:278.00px;width:1.20px;height:27.00px;background:#3d3d3d;"></div>
<span style="left:232.47px;top:281.15px;font-size:21.80px;color:#dcdcdc;">E</span>
<div style="left:307.10px;top:278.00px;width:1.20px;height:27.00px;background:#3d3d3d;"></div>
<span style="left:278.12px;top:281.15px;font-size:21.80px;color:#dcdcdc;">F</span>
<div style="left:352.20px;top:278.00px;width:1.20px;height:27.00px;background:#3d3d3d;"></div>
<span style="left:322.02px;top:281.15px;font-size:21.80px;color:#dcdcdc;">G</span>
<div style="left:397.20px;top:278.00px;width:1.20px;height:27.00px;background:#3d3d3d;"></div>
<span style="left:367.45px;top:281.15px;font-size:21.80px;color:#dcdcdc;">H</span>
<div style="left:602.90px;top:278.00px;width:1.20px;height:27.00px;background:#3d3d3d;"></div>
<span style="left:497.65px;top:281.15px;font-size:21.80px;color:#dcdcdc;">I</span>
<div style="left:808.70px;top:278.00px;width:1.20px;height:27.00px;background:#3d3d3d;"></div>
<span style="left:701.60px;top:281.15px;font-size:21.80px;color:#dcdcdc;">J</span>
<div style="left:1014.60px;top:278.00px;width:1.20px;height:27.00px;background:#3d3d3d;"></div>
<span style="left:904.24px;top:281.15px;font-size:21.80px;color:#dcdcdc;">K</span>
<div style="left:1220.60px;top:278.00px;width:1.20px;height:27.00px;background:#3d3d3d;"></div>
<span style="left:1111.61px;top:281.15px;font-size:21.80px;color:#dcdcdc;">L</span>
<div style="left:1426.50px;top:278.00px;width:1.20px;height:27.00px;background:#3d3d3d;"></div>
<span style="left:1315.10px;top:281.15px;font-size:21.80px;color:#dcdcdc;">M</span>
<div style="left:1632.50px;top:278.00px;width:1.20px;height:27.00px;background:#3d3d3d;"></div>
<span style="left:1522.25px;top:281.15px;font-size:21.80px;color:#dcdcdc;">N</span>
<div style="left:1838.40px;top:278.00px;width:1.20px;height:27.00px;background:#3d3d3d;"></div>
<span style="left:1727.60px;top:281.15px;font-size:21.80px;color:#dcdcdc;">O</span>
<div style="left:1893.60px;top:278.00px;width:1.20px;height:27.00px;background:#3d3d3d;"></div>
<span style="left:1859.02px;top:281.15px;font-size:21.80px;color:#dcdcdc;">P</span>
<div style="left:2055.80px;top:278.00px;width:1.20px;height:27.00px;background:#3d3d3d;"></div>
<span style="left:1966.85px;top:281.15px;font-size:21.80px;color:#dcdcdc;">Q</span>
<div style="left:2217.90px;top:278.00px;width:1.20px;height:27.00px;background:#3d3d3d;"></div>
<span style="left:2129.22px;top:281.15px;font-size:21.80px;color:#dcdcdc;">R</span>
<div style="left:2379.90px;top:278.00px;width:1.20px;height:27.00px;background:#3d3d3d;"></div>
<span style="left:2292.25px;top:281.15px;font-size:21.80px;color:#dcdcdc;">S</span>
<div style="left:2541.90px;top:278.00px;width:1.20px;height:27.00px;background:#3d3d3d;"></div>
<span style="left:2454.85px;top:281.15px;font-size:21.80px;color:#dcdcdc;">T</span>
<div style="left:2704.00px;top:278.00px;width:1.20px;height:27.00px;background:#3d3d3d;"></div>
<span style="left:2615.70px;top:281.15px;font-size:21.80px;color:#dcdcdc;">U</span>
<div style="left:2847.00px;top:278.00px;width:1.20px;height:27.00px;background:#3d3d3d;"></div>
<span style="left:2768.85px;top:281.15px;font-size:21.80px;color:#dcdcdc;">V</span>
<span style="left:2848.89px;top:281.15px;font-size:21.80px;color:#dcdcdc;clip-path:inset(0 10px 0 0);">W</span>
<div style="left:11.00px;top:305.00px;width:42.00px;height:1365.00px;background:#0a0a0a;"></div>
<div style="left:11.00px;top:305.00px;width:42.00px;height:43.30px;background:#6a6a6a;"></div>
<div style="left:11px;top:305px;width:42px;height:1365px;overflow:hidden;">
<div style="left:0.00px;top:42.70px;width:42.00px;height:1.20px;background:#7c7c7c;"></div>
<span style="left:14.87px;top:18.98px;font-size:22.00px;color:#f2f2f2;">1</span>
<div style="left:0.00px;top:84.10px;width:42.00px;height:1.20px;background:#7c7c7c;"></div>
<span style="left:15.20px;top:60.38px;font-size:22.00px;color:#e4e4e4;">2</span>
<div style="left:0.00px;top:124.70px;width:42.00px;height:1.20px;background:#7c7c7c;"></div>
<span style="left:15.20px;top:100.98px;font-size:22.00px;color:#e4e4e4;">3</span>
<div style="left:0.00px;top:153.50px;width:42.00px;height:1.20px;background:#7c7c7c;"></div>
<span style="left:15.30px;top:129.78px;font-size:22.00px;color:#e4e4e4;">4</span>
<div style="left:0.00px;top:196.10px;width:42.00px;height:1.20px;background:#7c7c7c;"></div>
<span style="left:15.20px;top:172.38px;font-size:22.00px;color:#e4e4e4;">5</span>
<div style="left:0.00px;top:231.00px;width:42.00px;height:1.20px;background:#7c7c7c;"></div>
<span style="left:15.09px;top:207.28px;font-size:22.00px;color:#e4e4e4;">6</span>
<div style="left:0.00px;top:259.90px;width:42.00px;height:1.20px;background:#7c7c7c;"></div>
<div style="left:0.00px;top:265.60px;width:42.00px;height:1.20px;background:#7c7c7c;"></div>
<span style="left:15.20px;top:236.18px;font-size:22.00px;color:#e4e4e4;">7</span>
<div style="left:0.00px;top:294.40px;width:42.00px;height:1.20px;background:#7c7c7c;"></div>
<span style="left:15.20px;top:270.68px;font-size:22.00px;color:#e4e4e4;">9</span>
<div style="left:0.00px;top:323.60px;width:42.00px;height:1.20px;background:#7c7c7c;"></div>
<span style="left:8.88px;top:299.88px;font-size:22.00px;color:#e4e4e4;transform:scaleX(0.9818);transform-origin:0 0;">10</span>
<div style="left:0.00px;top:352.80px;width:42.00px;height:1.20px;background:#7c7c7c;"></div>
<span style="left:8.73px;top:329.08px;font-size:22.00px;color:#e4e4e4;transform:scaleX(1.0730);transform-origin:0 0;">11</span>
<div style="left:0.00px;top:382.00px;width:42.00px;height:1.20px;background:#7c7c7c;"></div>
<span style="left:8.86px;top:358.28px;font-size:22.00px;color:#e4e4e4;transform:scaleX(0.9968);transform-origin:0 0;">12</span>
<div style="left:0.00px;top:410.80px;width:42.00px;height:1.20px;background:#7c7c7c;"></div>
<span style="left:8.87px;top:387.08px;font-size:22.00px;color:#e4e4e4;transform:scaleX(0.9868);transform-origin:0 0;">13</span>
<div style="left:0.00px;top:439.60px;width:42.00px;height:1.20px;background:#7c7c7c;"></div>
<span style="left:8.89px;top:415.88px;font-size:22.00px;color:#e4e4e4;transform:scaleX(0.9769);transform-origin:0 0;">14</span>
<div style="left:0.00px;top:462.80px;width:42.00px;height:1.20px;background:#7c7c7c;"></div>
<span style="left:8.87px;top:439.08px;font-size:22.00px;color:#e4e4e4;transform:scaleX(0.9868);transform-origin:0 0;">15</span>
<div style="left:0.00px;top:503.90px;width:42.00px;height:1.20px;background:#7c7c7c;"></div>
<span style="left:8.87px;top:480.18px;font-size:22.00px;color:#e4e4e4;transform:scaleX(0.9868);transform-origin:0 0;">16</span>
<div style="left:0.00px;top:532.90px;width:42.00px;height:1.20px;background:#7c7c7c;"></div>
<span style="left:8.86px;top:509.18px;font-size:22.00px;color:#e4e4e4;transform:scaleX(0.9968);transform-origin:0 0;">17</span>
<div style="left:0.00px;top:561.90px;width:42.00px;height:1.20px;background:#7c7c7c;"></div>
<span style="left:8.87px;top:538.18px;font-size:22.00px;color:#e4e4e4;transform:scaleX(0.9868);transform-origin:0 0;">18</span>
<div style="left:0.00px;top:590.90px;width:42.00px;height:1.20px;background:#7c7c7c;"></div>
<span style="left:8.86px;top:567.18px;font-size:22.00px;color:#e4e4e4;transform:scaleX(0.9917);transform-origin:0 0;">19</span>
<div style="left:0.00px;top:619.90px;width:42.00px;height:1.20px;background:#7c7c7c;"></div>
<span style="left:9.45px;top:596.18px;font-size:22.00px;color:#e4e4e4;transform:scaleX(0.9579);transform-origin:0 0;">20</span>
<div style="left:0.00px;top:648.90px;width:42.00px;height:1.20px;background:#7c7c7c;"></div>
<span style="left:9.44px;top:625.18px;font-size:22.00px;color:#e4e4e4;transform:scaleX(0.9673);transform-origin:0 0;">21</span>
<div style="left:0.00px;top:677.90px;width:42.00px;height:1.20px;background:#7c7c7c;"></div>
<span style="left:9.43px;top:654.18px;font-size:22.00px;color:#e4e4e4;transform:scaleX(0.9721);transform-origin:0 0;">22</span>
<div style="left:0.00px;top:706.90px;width:42.00px;height:1.20px;background:#7c7c7c;"></div>
<span style="left:9.44px;top:683.18px;font-size:22.00px;color:#e4e4e4;transform:scaleX(0.9626);transform-origin:0 0;">23</span>
<div style="left:0.00px;top:735.90px;width:42.00px;height:1.20px;background:#7c7c7c;"></div>
<span style="left:9.45px;top:712.18px;font-size:22.00px;color:#e4e4e4;transform:scaleX(0.9532);transform-origin:0 0;">24</span>
<div style="left:0.00px;top:764.90px;width:42.00px;height:1.20px;background:#7c7c7c;"></div>
<span style="left:9.44px;top:741.18px;font-size:22.00px;color:#e4e4e4;transform:scaleX(0.9626);transform-origin:0 0;">25</span>
<div style="left:0.00px;top:793.90px;width:42.00px;height:1.20px;background:#7c7c7c;"></div>
<span style="left:9.44px;top:770.18px;font-size:22.00px;color:#e4e4e4;transform:scaleX(0.9626);transform-origin:0 0;">26</span>
<div style="left:0.00px;top:822.90px;width:42.00px;height:1.20px;background:#7c7c7c;"></div>
<span style="left:9.43px;top:799.18px;font-size:22.00px;color:#e4e4e4;transform:scaleX(0.9721);transform-origin:0 0;">27</span>
<div style="left:0.00px;top:851.90px;width:42.00px;height:1.20px;background:#7c7c7c;"></div>
<span style="left:9.44px;top:828.18px;font-size:22.00px;color:#e4e4e4;transform:scaleX(0.9626);transform-origin:0 0;">28</span>
<div style="left:0.00px;top:880.90px;width:42.00px;height:1.20px;background:#7c7c7c;"></div>
<span style="left:9.44px;top:857.18px;font-size:22.00px;color:#e4e4e4;transform:scaleX(0.9673);transform-origin:0 0;">29</span>
<div style="left:0.00px;top:909.90px;width:42.00px;height:1.20px;background:#7c7c7c;"></div>
<span style="left:9.67px;top:886.18px;font-size:22.00px;color:#e4e4e4;transform:scaleX(0.9486);transform-origin:0 0;">30</span>
<div style="left:0.00px;top:938.90px;width:42.00px;height:1.20px;background:#7c7c7c;"></div>
<span style="left:9.66px;top:915.18px;font-size:22.00px;color:#e4e4e4;transform:scaleX(0.9579);transform-origin:0 0;">31</span>
<div style="left:0.00px;top:967.90px;width:42.00px;height:1.20px;background:#7c7c7c;"></div>
<span style="left:9.65px;top:944.18px;font-size:22.00px;color:#e4e4e4;transform:scaleX(0.9626);transform-origin:0 0;">32</span>
<div style="left:0.00px;top:996.90px;width:42.00px;height:1.20px;background:#7c7c7c;"></div>
<span style="left:9.66px;top:973.18px;font-size:22.00px;color:#e4e4e4;transform:scaleX(0.9532);transform-origin:0 0;">33</span>
<div style="left:0.00px;top:1025.90px;width:42.00px;height:1.20px;background:#7c7c7c;"></div>
<span style="left:9.67px;top:1002.18px;font-size:22.00px;color:#e4e4e4;transform:scaleX(0.9441);transform-origin:0 0;">34</span>
<div style="left:0.00px;top:1054.90px;width:42.00px;height:1.20px;background:#7c7c7c;"></div>
<span style="left:9.66px;top:1031.18px;font-size:22.00px;color:#e4e4e4;transform:scaleX(0.9532);transform-origin:0 0;">35</span>
<div style="left:0.00px;top:1083.90px;width:42.00px;height:1.20px;background:#7c7c7c;"></div>
<span style="left:9.66px;top:1060.18px;font-size:22.00px;color:#e4e4e4;transform:scaleX(0.9532);transform-origin:0 0;">36</span>
<div style="left:0.00px;top:1112.90px;width:42.00px;height:1.20px;background:#7c7c7c;"></div>
<span style="left:9.65px;top:1089.18px;font-size:22.00px;color:#e4e4e4;transform:scaleX(0.9626);transform-origin:0 0;">37</span>
<div style="left:0.00px;top:1141.90px;width:42.00px;height:1.20px;background:#7c7c7c;"></div>
<span style="left:9.66px;top:1118.18px;font-size:22.00px;color:#e4e4e4;transform:scaleX(0.9532);transform-origin:0 0;">38</span>
<div style="left:0.00px;top:1170.90px;width:42.00px;height:1.20px;background:#7c7c7c;"></div>
<span style="left:9.66px;top:1147.18px;font-size:22.00px;color:#e4e4e4;transform:scaleX(0.9579);transform-origin:0 0;">39</span>
<div style="left:0.00px;top:1199.90px;width:42.00px;height:1.20px;background:#7c7c7c;"></div>
<span style="left:10.09px;top:1176.18px;font-size:22.00px;color:#e4e4e4;transform:scaleX(0.9306);transform-origin:0 0;">40</span>
<div style="left:0.00px;top:1228.90px;width:42.00px;height:1.20px;background:#7c7c7c;"></div>
<span style="left:10.09px;top:1205.18px;font-size:22.00px;color:#e4e4e4;transform:scaleX(0.9395);transform-origin:0 0;">41</span>
<div style="left:0.00px;top:1271.50px;width:42.00px;height:1.20px;background:#7c7c7c;"></div>
<span style="left:10.08px;top:1247.78px;font-size:22.00px;color:#e4e4e4;transform:scaleX(0.9441);transform-origin:0 0;">42</span>
<div style="left:0.00px;top:1301.10px;width:42.00px;height:1.20px;background:#7c7c7c;"></div>
<span style="left:10.09px;top:1277.38px;font-size:22.00px;color:#e4e4e4;transform:scaleX(0.9351);transform-origin:0 0;">43</span>
<div style="left:0.00px;top:1330.00px;width:42.00px;height:1.20px;background:#7c7c7c;"></div>
<span style="left:10.09px;top:1306.28px;font-size:22.00px;color:#e4e4e4;transform:scaleX(0.9262);transform-origin:0 0;">44</span>
<div style="left:0.00px;top:1359.00px;width:42.00px;height:1.20px;background:#7c7c7c;"></div>
<span style="left:10.09px;top:1335.28px;font-size:22.00px;color:#e4e4e4;transform:scaleX(0.9351);transform-origin:0 0;">45</span>
<div style="left:0.00px;top:1387.40px;width:42.00px;height:1.20px;background:#7c7c7c;"></div>
<span style="left:10.09px;top:1363.68px;font-size:22.00px;color:#e4e4e4;transform:scaleX(0.9351);transform-origin:0 0;">46</span>
</div>
<div style="left:52.20px;top:304.20px;width:31.00px;height:1.70px;background:#1e7a47;"></div>
<div style="left:52.20px;top:304.20px;width:1.70px;height:44.10px;background:#1e7a47;"></div>
<div style="left:53.00px;top:458.70px;width:2807.00px;height:1.10px;background:#a0a0a0;"></div>
<div style="left:53px;top:305px;width:2807px;height:1365px;overflow:hidden;"><div style="left:-53px;top:-305px;width:2902px;height:1762px;">
<span style="left:89.79px;top:308.56px;font-size:38.80px;color:#222;transform:scaleX(1.0611);transform-origin:0 0;font-weight:bold;-webkit-text-stroke:0.5px #222;">Top Revenue</span>
<span style="left:88.02px;top:352.57px;font-size:35.00px;color:#000;transform:scaleX(1.0030);transform-origin:0 0;font-weight:bold;-webkit-text-stroke:0.5px #000;">ABC Company Inc.</span>
<span style="left:86.68px;top:399.62px;font-size:21.60px;color:#2b7bef;transform:scaleX(1.0647);transform-origin:0 0;font-weight:bold;">Go to Table of Contents</span>
<div style="left:87.40px;top:420.40px;width:257.40px;height:1.90px;background:#2b7bef;"></div>
<div style="left:83.00px;top:459.40px;width:2764.60px;height:42.40px;background:#4c50d0;"></div>
<div style="left:83.00px;top:458.90px;width:2764.60px;height:1.00px;background:rgba(110,110,120,0.75);"></div>
<span style="left:951.63px;top:464.21px;font-size:34.60px;color:#fff;transform:scaleX(1.0682);transform-origin:0 0;font-weight:bold;-webkit-text-stroke:0.55px #fff;">Top</span>
<span style="left:1024.95px;top:464.21px;font-size:34.60px;color:#fff;transform:scaleX(1.1040);transform-origin:0 0;font-weight:bold;-webkit-text-stroke:0.55px #fff;">5</span>
<span style="left:1055.94px;top:464.21px;font-size:34.60px;color:#fff;transform:scaleX(1.0487);transform-origin:0 0;font-weight:bold;-webkit-text-stroke:0.55px #fff;">Revenue</span>
<span style="left:1215.52px;top:464.21px;font-size:34.60px;color:#fff;transform:scaleX(1.0375);transform-origin:0 0;font-weight:bold;-webkit-text-stroke:0.55px #fff;">Streams</span>
<span style="left:1365.74px;top:464.21px;font-size:34.60px;color:#fff;transform:scaleX(1.1885);transform-origin:0 0;font-weight:bold;-webkit-text-stroke:0.55px #fff;">($'000)</span>
<span style="left:1502.83px;top:464.21px;font-size:34.60px;color:#fff;transform:scaleX(1.4961);transform-origin:0 0;font-weight:bold;-webkit-text-stroke:0.55px #fff;">-</span>
<span style="left:1529.44px;top:464.21px;font-size:34.60px;color:#fff;transform:scaleX(1.1156);transform-origin:0 0;font-weight:bold;-webkit-text-stroke:0.55px #fff;">5</span>
<span style="left:1562.25px;top:464.21px;font-size:34.60px;color:#fff;transform:scaleX(1.0175);transform-origin:0 0;font-weight:bold;-webkit-text-stroke:0.55px #fff;">years</span>
<span style="left:1663.43px;top:464.21px;font-size:34.60px;color:#fff;transform:scaleX(1.0624);transform-origin:0 0;font-weight:bold;-webkit-text-stroke:0.55px #fff;">to</span>
<span style="left:1708.65px;top:464.21px;font-size:34.60px;color:#fff;font-weight:bold;-webkit-text-stroke:0.55px #fff;">December</span>
<span style="left:1891.41px;top:464.21px;font-size:34.60px;color:#fff;transform:scaleX(1.1493);transform-origin:0 0;font-weight:bold;-webkit-text-stroke:0.55px #fff;">2030</span>
<div style="left:83.00px;top:767.20px;width:2764.60px;height:42.20px;background:#4c50d0;"></div>
<span style="left:951.63px;top:772.01px;font-size:34.60px;color:#fff;transform:scaleX(1.0682);transform-origin:0 0;font-weight:bold;-webkit-text-stroke:0.55px #fff;">Top</span>
<span style="left:1024.95px;top:772.01px;font-size:34.60px;color:#fff;transform:scaleX(1.1040);transform-origin:0 0;font-weight:bold;-webkit-text-stroke:0.55px #fff;">5</span>
<span style="left:1055.94px;top:772.01px;font-size:34.60px;color:#fff;transform:scaleX(1.0487);transform-origin:0 0;font-weight:bold;-webkit-text-stroke:0.55px #fff;">Revenue</span>
<span style="left:1215.52px;top:772.01px;font-size:34.60px;color:#fff;transform:scaleX(1.0375);transform-origin:0 0;font-weight:bold;-webkit-text-stroke:0.55px #fff;">Streams</span>
<span style="left:1365.74px;top:772.01px;font-size:34.60px;color:#fff;transform:scaleX(1.1885);transform-origin:0 0;font-weight:bold;-webkit-text-stroke:0.55px #fff;">($'000)</span>
<span style="left:1502.83px;top:772.01px;font-size:34.60px;color:#fff;transform:scaleX(1.4961);transform-origin:0 0;font-weight:bold;-webkit-text-stroke:0.55px #fff;">-</span>
<span style="left:1529.44px;top:772.01px;font-size:34.60px;color:#fff;transform:scaleX(1.1156);transform-origin:0 0;font-weight:bold;-webkit-text-stroke:0.55px #fff;">5</span>
<span style="left:1562.25px;top:772.01px;font-size:34.60px;color:#fff;transform:scaleX(1.0175);transform-origin:0 0;font-weight:bold;-webkit-text-stroke:0.55px #fff;">years</span>
<span style="left:1663.43px;top:772.01px;font-size:34.60px;color:#fff;transform:scaleX(1.0624);transform-origin:0 0;font-weight:bold;-webkit-text-stroke:0.55px #fff;">to</span>
<span style="left:1708.65px;top:772.01px;font-size:34.60px;color:#fff;font-weight:bold;-webkit-text-stroke:0.55px #fff;">December</span>
<span style="left:1891.41px;top:772.01px;font-size:34.60px;color:#fff;transform:scaleX(1.1493);transform-origin:0 0;font-weight:bold;-webkit-text-stroke:0.55px #fff;">2030</span>
<div style="left:603.50px;top:500.60px;width:1029.60px;height:1.40px;background:#fff;"></div>
<div style="left:83.00px;top:537.00px;width:1550.10px;height:27.80px;background:#6d73e6;"></div>
<div style="left:602.80px;top:537.00px;width:1.50px;height:27.80px;background:#fff;"></div>
<div style="left:808.60px;top:537.00px;width:1.50px;height:27.80px;background:#fff;"></div>
<div style="left:1014.50px;top:537.00px;width:1.50px;height:27.80px;background:#fff;"></div>
<div style="left:1220.50px;top:537.00px;width:1.50px;height:27.80px;background:#fff;"></div>
<div style="left:1426.40px;top:537.00px;width:1.50px;height:27.80px;background:#fff;"></div>
<span style="left:97.43px;top:541.25px;font-size:21.20px;color:#fff;transform:scaleX(1.0975);transform-origin:0 0;font-weight:bold;-webkit-text-stroke:0.3px #fff;">Year Ending</span>
<span style="left:679.37px;top:541.86px;font-size:20.60px;color:#fff;transform:scaleX(1.2232);transform-origin:0 0;font-weight:bold;-webkit-text-stroke:0.3px #fff;">2026</span>
<span style="left:885.22px;top:541.86px;font-size:20.60px;color:#fff;transform:scaleX(1.2260);transform-origin:0 0;font-weight:bold;-webkit-text-stroke:0.3px #fff;">2027</span>
<span style="left:1091.17px;top:541.86px;font-size:20.60px;color:#fff;transform:scaleX(1.2203);transform-origin:0 0;font-weight:bold;-webkit-text-stroke:0.3px #fff;">2028</span>
<span style="left:1297.12px;top:541.86px;font-size:20.60px;color:#fff;transform:scaleX(1.2232);transform-origin:0 0;font-weight:bold;-webkit-text-stroke:0.3px #fff;">2029</span>
<span style="left:1503.07px;top:541.86px;font-size:20.60px;color:#fff;transform:scaleX(1.2260);transform-origin:0 0;font-weight:bold;-webkit-text-stroke:0.3px #fff;">2030</span>
<div style="left:1894.20px;top:537.00px;width:810.40px;height:27.80px;background:#6d73e6;"></div>
<div style="left:2055.70px;top:537.00px;width:1.50px;height:27.80px;background:#fff;"></div>
<div style="left:2217.80px;top:537.00px;width:1.50px;height:27.80px;background:#fff;"></div>
<div style="left:2379.80px;top:537.00px;width:1.50px;height:27.80px;background:#fff;"></div>
<div style="left:2541.80px;top:537.00px;width:1.50px;height:27.80px;background:#fff;"></div>
<span style="left:1948.27px;top:541.86px;font-size:20.60px;color:#fff;transform:scaleX(1.2232);transform-origin:0 0;font-weight:bold;-webkit-text-stroke:0.3px #fff;">2026</span>
<span style="left:2110.42px;top:541.86px;font-size:20.60px;color:#fff;transform:scaleX(1.2260);transform-origin:0 0;font-weight:bold;-webkit-text-stroke:0.3px #fff;">2027</span>
<span style="left:2272.47px;top:541.86px;font-size:20.60px;color:#fff;transform:scaleX(1.2203);transform-origin:0 0;font-weight:bold;-webkit-text-stroke:0.3px #fff;">2028</span>
<span style="left:2434.47px;top:541.86px;font-size:20.60px;color:#fff;transform:scaleX(1.2232);transform-origin:0 0;font-weight:bold;-webkit-text-stroke:0.3px #fff;">2029</span>
<span style="left:2596.52px;top:541.86px;font-size:20.60px;color:#fff;transform:scaleX(1.2260);transform-origin:0 0;font-weight:bold;-webkit-text-stroke:0.3px #fff;">2030</span>
<span style="left:85.33px;top:575.99px;font-size:20.80px;color:#000;transform:scaleX(1.0357);transform-origin:0 0;">Standard Laundry Pounds</span>
<span style="left:774.33px;top:575.99px;font-size:20.80px;color:#000;transform:scaleX(1.0366);transform-origin:0 0;">83</span>
<span style="left:968.06px;top:575.99px;font-size:20.80px;color:#000;transform:scaleX(1.0491);transform-origin:0 0;">257</span>
<span style="left:1174.29px;top:575.99px;font-size:20.80px;color:#000;transform:scaleX(1.0326);transform-origin:0 0;">590</span>
<span style="left:1360.89px;top:575.99px;font-size:20.80px;color:#000;transform:scaleX(1.0613);transform-origin:0 0;">1,068</span>
<span style="left:1566.89px;top:575.99px;font-size:20.80px;color:#000;transform:scaleX(1.0613);transform-origin:0 0;">1,575</span>
<span style="left:1976.74px;top:575.99px;font-size:20.80px;color:#000;transform:scaleX(1.1263);transform-origin:0 0;font-style:italic;">70.7%</span>
<span style="left:2138.84px;top:575.99px;font-size:20.80px;color:#000;transform:scaleX(1.1263);transform-origin:0 0;font-style:italic;">70.8%</span>
<span style="left:2302.04px;top:575.99px;font-size:20.80px;color:#000;transform:scaleX(1.1057);transform-origin:0 0;font-style:italic;">69.9%</span>
<span style="left:2462.84px;top:575.99px;font-size:20.80px;color:#000;transform:scaleX(1.1263);transform-origin:0 0;font-style:italic;">70.5%</span>
<span style="left:2626.14px;top:575.99px;font-size:20.80px;color:#000;transform:scaleX(1.1057);transform-origin:0 0;font-style:italic;">69.6%</span>
<span style="left:85.32px;top:604.99px;font-size:20.80px;color:#000;transform:scaleX(1.0519);transform-origin:0 0;">Specialty Items Units</span>
<span style="left:773.63px;top:604.99px;font-size:20.80px;color:#000;transform:scaleX(1.0678);transform-origin:0 0;">18</span>
<span style="left:980.34px;top:604.99px;font-size:20.80px;color:#000;transform:scaleX(1.0316);transform-origin:0 0;">56</span>
<span style="left:1173.50px;top:604.99px;font-size:20.80px;color:#000;transform:scaleX(1.0592);transform-origin:0 0;">133</span>
<span style="left:1379.97px;top:604.99px;font-size:20.80px;color:#000;transform:scaleX(1.0359);transform-origin:0 0;">234</span>
<span style="left:1586.19px;top:604.99px;font-size:20.80px;color:#000;transform:scaleX(1.0326);transform-origin:0 0;">360</span>
<span style="left:1978.63px;top:604.99px;font-size:20.80px;color:#000;transform:scaleX(1.0937);transform-origin:0 0;font-style:italic;">15.4%</span>
<span style="left:2140.73px;top:604.99px;font-size:20.80px;color:#000;transform:scaleX(1.0937);transform-origin:0 0;font-style:italic;">15.3%</span>
<span style="left:2302.73px;top:604.99px;font-size:20.80px;color:#000;transform:scaleX(1.0937);transform-origin:0 0;font-style:italic;">15.8%</span>
<span style="left:2464.73px;top:604.99px;font-size:20.80px;color:#000;transform:scaleX(1.0937);transform-origin:0 0;font-style:italic;">15.5%</span>
<span style="left:2626.83px;top:604.99px;font-size:20.80px;color:#000;transform:scaleX(1.0937);transform-origin:0 0;font-style:italic;">15.9%</span>
<span style="left:84.59px;top:634.09px;font-size:20.80px;color:#000;transform:scaleX(1.0300);transform-origin:0 0;">Eco-Friendly Laundry Pounds</span>
<span style="left:773.63px;top:634.09px;font-size:20.80px;color:#000;transform:scaleX(1.0678);transform-origin:0 0;">16</span>
<span style="left:980.35px;top:634.09px;font-size:20.80px;color:#000;transform:scaleX(1.0266);transform-origin:0 0;">50</span>
<span style="left:1173.49px;top:634.09px;font-size:20.80px;color:#000;transform:scaleX(1.0627);transform-origin:0 0;">121</span>
<span style="left:1379.97px;top:634.09px;font-size:20.80px;color:#000;transform:scaleX(1.0424);transform-origin:0 0;">213</span>
<span style="left:1586.19px;top:634.09px;font-size:20.80px;color:#000;transform:scaleX(1.0391);transform-origin:0 0;">329</span>
<span style="left:1978.63px;top:634.09px;font-size:20.80px;color:#000;transform:scaleX(1.0937);transform-origin:0 0;font-style:italic;">13.9%</span>
<span style="left:2140.73px;top:634.09px;font-size:20.80px;color:#000;transform:scaleX(1.0937);transform-origin:0 0;font-style:italic;">13.9%</span>
<span style="left:2302.73px;top:634.09px;font-size:20.80px;color:#000;transform:scaleX(1.0937);transform-origin:0 0;font-style:italic;">14.3%</span>
<span style="left:2464.73px;top:634.09px;font-size:20.80px;color:#000;transform:scaleX(1.0937);transform-origin:0 0;font-style:italic;">14.1%</span>
<span style="left:2626.83px;top:634.09px;font-size:20.80px;color:#000;transform:scaleX(1.0937);transform-origin:0 0;font-style:italic;">14.5%</span>
<span style="left:86.06px;top:663.19px;font-size:20.80px;color:#000;transform:scaleX(1.2166);transform-origin:0 0;">-</span>
<span style="left:765.82px;top:663.19px;font-size:20.80px;color:#000;transform:scaleX(1.2559);transform-origin:0 0;">-</span>
<span style="left:971.72px;top:663.19px;font-size:20.80px;color:#000;transform:scaleX(1.2559);transform-origin:0 0;">-</span>
<span style="left:1177.72px;top:663.19px;font-size:20.80px;color:#000;transform:scaleX(1.2559);transform-origin:0 0;">-</span>
<span style="left:1383.62px;top:663.19px;font-size:20.80px;color:#000;transform:scaleX(1.2559);transform-origin:0 0;">-</span>
<span style="left:1589.62px;top:663.19px;font-size:20.80px;color:#000;transform:scaleX(1.2559);transform-origin:0 0;">-</span>
<span style="left:2034.79px;top:663.19px;font-size:20.80px;color:#000;transform:scaleX(1.2574);transform-origin:0 0;font-style:italic;">-</span>
<span style="left:2196.89px;top:663.19px;font-size:20.80px;color:#000;transform:scaleX(1.2574);transform-origin:0 0;font-style:italic;">-</span>
<span style="left:2358.89px;top:663.19px;font-size:20.80px;color:#000;transform:scaleX(1.2574);transform-origin:0 0;font-style:italic;">-</span>
<span style="left:2520.89px;top:663.19px;font-size:20.80px;color:#000;transform:scaleX(1.2574);transform-origin:0 0;font-style:italic;">-</span>
<span style="left:2682.99px;top:663.19px;font-size:20.80px;color:#000;transform:scaleX(1.2574);transform-origin:0 0;font-style:italic;">-</span>
<span style="left:85.32px;top:691.99px;font-size:20.80px;color:#000;transform:scaleX(1.0521);transform-origin:0 0;">Other Revenue</span>
<span style="left:765.82px;top:691.99px;font-size:20.80px;color:#000;transform:scaleX(1.2559);transform-origin:0 0;">-</span>
<span style="left:971.72px;top:691.99px;font-size:20.80px;color:#000;transform:scaleX(1.2559);transform-origin:0 0;">-</span>
<span style="left:1177.72px;top:691.99px;font-size:20.80px;color:#000;transform:scaleX(1.2559);transform-origin:0 0;">-</span>
<span style="left:1383.62px;top:691.99px;font-size:20.80px;color:#000;transform:scaleX(1.2559);transform-origin:0 0;">-</span>
<span style="left:1589.62px;top:691.99px;font-size:20.80px;color:#000;transform:scaleX(1.2559);transform-origin:0 0;">-</span>
<span style="left:2034.79px;top:691.99px;font-size:20.80px;color:#000;transform:scaleX(1.2574);transform-origin:0 0;font-style:italic;">-</span>
<span style="left:2196.89px;top:691.99px;font-size:20.80px;color:#000;transform:scaleX(1.2574);transform-origin:0 0;font-style:italic;">-</span>
<span style="left:2358.89px;top:691.99px;font-size:20.80px;color:#000;transform:scaleX(1.2574);transform-origin:0 0;font-style:italic;">-</span>
<span style="left:2520.89px;top:691.99px;font-size:20.80px;color:#000;transform:scaleX(1.2574);transform-origin:0 0;font-style:italic;">-</span>
<span style="left:2682.99px;top:691.99px;font-size:20.80px;color:#000;transform:scaleX(1.2574);transform-origin:0 0;font-style:italic;">-</span>
<div style="left:82.20px;top:716.20px;width:1551.60px;height:29.40px;background:#4bb2e7;"></div>
<span style="left:98.54px;top:718.14px;font-size:26.30px;color:#fff;transform:scaleX(1.0034);transform-origin:0 0;font-weight:bold;-webkit-text-stroke:0.3px #fff;">Total Revenue</span>
<span style="left:752.39px;top:721.99px;font-size:20.80px;color:#fff;transform:scaleX(1.2895);transform-origin:0 0;font-weight:bold;-webkit-text-stroke:0.3px #fff;">117</span>
<span style="left:959.27px;top:721.99px;font-size:20.80px;color:#fff;transform:scaleX(1.2169);transform-origin:0 0;font-weight:bold;-webkit-text-stroke:0.3px #fff;">362</span>
<span style="left:1165.15px;top:721.99px;font-size:20.80px;color:#fff;transform:scaleX(1.1945);transform-origin:0 0;font-weight:bold;-webkit-text-stroke:0.3px #fff;">844</span>
<span style="left:1349.99px;top:721.99px;font-size:20.80px;color:#fff;transform:scaleX(1.2104);transform-origin:0 0;font-weight:bold;-webkit-text-stroke:0.3px #fff;">1,515</span>
<span style="left:1556.63px;top:721.99px;font-size:20.80px;color:#fff;transform:scaleX(1.1882);transform-origin:0 0;font-weight:bold;-webkit-text-stroke:0.3px #fff;">2,264</span>
<div style="left:1893.80px;top:716.20px;width:811.20px;height:29.40px;background:#4bb2e7;"></div>
<span style="left:1982.41px;top:721.36px;font-size:20.60px;color:#fff;transform:scaleX(1.2739);transform-origin:0 0;font-weight:bold;font-style:italic;-webkit-text-stroke:0.3px #fff;">100%</span>
<span style="left:2144.51px;top:721.36px;font-size:20.60px;color:#fff;transform:scaleX(1.2739);transform-origin:0 0;font-weight:bold;font-style:italic;-webkit-text-stroke:0.3px #fff;">100%</span>
<span style="left:2306.51px;top:721.36px;font-size:20.60px;color:#fff;transform:scaleX(1.2739);transform-origin:0 0;font-weight:bold;font-style:italic;-webkit-text-stroke:0.3px #fff;">100%</span>
<span style="left:2468.51px;top:721.36px;font-size:20.60px;color:#fff;transform:scaleX(1.2739);transform-origin:0 0;font-weight:bold;font-style:italic;-webkit-text-stroke:0.3px #fff;">100%</span>
<span style="left:2630.61px;top:721.36px;font-size:20.60px;color:#fff;transform:scaleX(1.2739);transform-origin:0 0;font-weight:bold;font-style:italic;-webkit-text-stroke:0.3px #fff;">100%</span>
<svg width="2902" height="1762" viewBox="0 0 2902 1762" style="left:0;top:0;"><path d="M176 851.50 L1633 851.50" stroke="#4a76b4" stroke-width="1.15"/><path d="M176 915.29 L1633 915.29" stroke="#4a76b4" stroke-width="1.15"/><path d="M176 979.08 L1633 979.08" stroke="#4a76b4" stroke-width="1.15"/><path d="M176 1042.87 L1633 1042.87" stroke="#4a76b4" stroke-width="1.15"/><path d="M176 1106.66 L1633 1106.66" stroke="#4a76b4" stroke-width="1.15"/><path d="M176 1170.45 L1633 1170.45" stroke="#4a76b4" stroke-width="1.15"/><path d="M176 1234.24 L1633 1234.24" stroke="#4a76b4" stroke-width="1.15"/><path d="M176 1298.03 L1633 1298.03" stroke="#4a76b4" stroke-width="1.15"/><path d="M176 1361.82 L1633 1361.82" stroke="#4a76b4" stroke-width="1.15"/><path d="M176 1425.61 L1633 1425.61" stroke="#4a76b4" stroke-width="1.15"/><path d="M176 1489.40 L1633 1489.40" stroke="#4a76b4" stroke-width="1.15"/><rect x="225.2" y="1038.4" width="194.6" height="451.0" fill="#4bb2e7"/><rect x="225.2" y="940.2" width="194.6" height="98.5" fill="#4c50d0"/><rect x="225.2" y="851.5" width="194.6" height="89.0" fill="#f17c70"/><rect x="516.4" y="1037.8" width="194.6" height="451.6" fill="#4bb2e7"/><rect x="516.4" y="940.2" width="194.6" height="97.9" fill="#4c50d0"/><rect x="516.4" y="851.5" width="194.6" height="89.0" fill="#f17c70"/><rect x="807.6" y="1043.5" width="194.6" height="445.9" fill="#4bb2e7"/><rect x="807.6" y="942.7" width="194.6" height="101.1" fill="#4c50d0"/><rect x="807.6" y="851.5" width="194.6" height="91.5" fill="#f17c70"/><rect x="1098.8" y="1039.7" width="194.6" height="449.7" fill="#4bb2e7"/><rect x="1098.8" y="940.8" width="194.6" height="99.2" fill="#4c50d0"/><rect x="1098.8" y="851.5" width="194.6" height="89.6" fill="#f17c70"/><rect x="1390.0" y="1045.4" width="194.6" height="444.0" fill="#4bb2e7"/><rect x="1390.0" y="944.0" width="194.6" height="101.7" fill="#4c50d0"/><rect x="1390.0" y="851.5" width="194.6" height="92.8" fill="#f17c70"/></svg>
<span style="left:86.18px;top:840.44px;font-size:22.40px;color:#000;transform:scaleX(1.2085);transform-origin:0 0;font-weight:bold;-webkit-text-stroke:0.45px #000;">100%</span>
<span style="left:100.03px;top:904.23px;font-size:22.40px;color:#000;transform:scaleX(1.2380);transform-origin:0 0;font-weight:bold;-webkit-text-stroke:0.45px #000;">90%</span>
<span style="left:100.17px;top:968.02px;font-size:22.40px;color:#000;transform:scaleX(1.2349);transform-origin:0 0;font-weight:bold;-webkit-text-stroke:0.45px #000;">80%</span>
<span style="left:99.89px;top:1031.81px;font-size:22.40px;color:#000;transform:scaleX(1.2412);transform-origin:0 0;font-weight:bold;-webkit-text-stroke:0.45px #000;">70%</span>
<span style="left:100.03px;top:1095.60px;font-size:22.40px;color:#000;transform:scaleX(1.2380);transform-origin:0 0;font-weight:bold;-webkit-text-stroke:0.45px #000;">60%</span>
<span style="left:100.17px;top:1159.39px;font-size:22.40px;color:#000;transform:scaleX(1.2349);transform-origin:0 0;font-weight:bold;-webkit-text-stroke:0.45px #000;">50%</span>
<span style="left:100.59px;top:1223.18px;font-size:22.40px;color:#000;transform:scaleX(1.2254);transform-origin:0 0;font-weight:bold;-webkit-text-stroke:0.45px #000;">40%</span>
<span style="left:100.31px;top:1286.97px;font-size:22.40px;color:#000;transform:scaleX(1.2317);transform-origin:0 0;font-weight:bold;-webkit-text-stroke:0.45px #000;">30%</span>
<span style="left:100.03px;top:1350.76px;font-size:22.40px;color:#000;transform:scaleX(1.2380);transform-origin:0 0;font-weight:bold;-webkit-text-stroke:0.45px #000;">20%</span>
<span style="left:99.31px;top:1414.55px;font-size:22.40px;color:#000;transform:scaleX(1.2542);transform-origin:0 0;font-weight:bold;-webkit-text-stroke:0.45px #000;">10%</span>
<span style="left:113.02px;top:1478.34px;font-size:22.40px;color:#000;transform:scaleX(1.3134);transform-origin:0 0;font-weight:bold;-webkit-text-stroke:0.45px #000;">0%</span>
<div style="left:299.55px;top:1246.20px;width:45.90px;height:36.20px;background:#dce6f2;"></div>
<span style="left:308.54px;top:1254.24px;font-size:22.40px;color:#000;transform:scaleX(1.1278);transform-origin:0 0;font-weight:bold;-webkit-text-stroke:0.45px #000;">83</span>
<div style="left:296.55px;top:971.59px;width:51.90px;height:36.20px;background:#b4b7ee;"></div>
<span style="left:311.45px;top:979.62px;font-size:22.40px;color:#000;transform:scaleX(1.1555);transform-origin:0 0;font-weight:bold;-webkit-text-stroke:0.45px #000;">18</span>
<div style="left:296.55px;top:878.13px;width:51.90px;height:36.20px;background:#f8cbad;"></div>
<span style="left:311.44px;top:886.17px;font-size:22.40px;color:#000;transform:scaleX(1.1612);transform-origin:0 0;font-weight:bold;-webkit-text-stroke:0.45px #000;">16</span>
<div style="left:306.00px;top:833.80px;width:33.00px;height:36.20px;background:#e2efda;"></div>
<span style="left:314.79px;top:841.84px;font-size:22.40px;color:#000;transform:scaleX(1.2406);transform-origin:0 0;font-weight:bold;-webkit-text-stroke:0.45px #000;">0</span>
<span style="left:294.00px;top:1507.44px;font-size:22.40px;color:#000;transform:scaleX(1.1435);transform-origin:0 0;font-weight:bold;-webkit-text-stroke:0.45px #000;">2026</span>
<div style="left:584.15px;top:1245.88px;width:59.10px;height:36.20px;background:#dce6f2;"></div>
<span style="left:593.03px;top:1253.92px;font-size:22.40px;color:#000;transform:scaleX(1.1119);transform-origin:0 0;font-weight:bold;-webkit-text-stroke:0.45px #000;">257</span>
<div style="left:587.75px;top:971.27px;width:51.90px;height:36.20px;background:#b4b7ee;"></div>
<span style="left:603.44px;top:979.31px;font-size:22.40px;color:#000;transform:scaleX(1.1278);transform-origin:0 0;font-weight:bold;-webkit-text-stroke:0.45px #000;">56</span>
<div style="left:587.75px;top:878.13px;width:51.90px;height:36.20px;background:#f8cbad;"></div>
<span style="left:603.44px;top:886.17px;font-size:22.40px;color:#000;transform:scaleX(1.1332);transform-origin:0 0;font-weight:bold;-webkit-text-stroke:0.45px #000;">50</span>
<div style="left:597.20px;top:833.80px;width:33.00px;height:36.20px;background:#e2efda;"></div>
<span style="left:605.99px;top:841.84px;font-size:22.40px;color:#000;transform:scaleX(1.2406);transform-origin:0 0;font-weight:bold;-webkit-text-stroke:0.45px #000;">0</span>
<span style="left:585.20px;top:1507.44px;font-size:22.40px;color:#000;transform:scaleX(1.1462);transform-origin:0 0;font-weight:bold;-webkit-text-stroke:0.45px #000;">2027</span>
<div style="left:875.35px;top:1248.75px;width:59.10px;height:36.20px;background:#dce6f2;"></div>
<span style="left:884.36px;top:1256.79px;font-size:22.40px;color:#000;transform:scaleX(1.1084);transform-origin:0 0;font-weight:bold;-webkit-text-stroke:0.45px #000;">590</span>
<div style="left:872.35px;top:975.41px;width:65.10px;height:36.20px;background:#b4b7ee;"></div>
<span style="left:887.29px;top:983.45px;font-size:22.40px;color:#000;transform:scaleX(1.1260);transform-origin:0 0;font-weight:bold;-webkit-text-stroke:0.45px #000;">133</span>
<div style="left:872.35px;top:879.41px;width:65.10px;height:36.20px;background:#f8cbad;"></div>
<span style="left:887.30px;top:887.45px;font-size:22.40px;color:#000;transform:scaleX(1.1189);transform-origin:0 0;font-weight:bold;-webkit-text-stroke:0.45px #000;">121</span>
<div style="left:888.40px;top:833.80px;width:33.00px;height:36.20px;background:#e2efda;"></div>
<span style="left:897.19px;top:841.84px;font-size:22.40px;color:#000;transform:scaleX(1.2406);transform-origin:0 0;font-weight:bold;-webkit-text-stroke:0.45px #000;">0</span>
<span style="left:876.41px;top:1507.44px;font-size:22.40px;color:#000;transform:scaleX(1.1409);transform-origin:0 0;font-weight:bold;-webkit-text-stroke:0.45px #000;">2028</span>
<div style="left:1155.65px;top:1246.84px;width:80.90px;height:36.20px;background:#dce6f2;"></div>
<span style="left:1164.92px;top:1254.88px;font-size:22.40px;color:#000;transform:scaleX(1.1003);transform-origin:0 0;font-weight:bold;-webkit-text-stroke:0.45px #000;">1,068</span>
<div style="left:1163.55px;top:972.54px;width:65.10px;height:36.20px;background:#b4b7ee;"></div>
<span style="left:1179.15px;top:980.58px;font-size:22.40px;color:#000;transform:scaleX(1.0879);transform-origin:0 0;font-weight:bold;-webkit-text-stroke:0.45px #000;">234</span>
<div style="left:1163.55px;top:878.45px;width:65.10px;height:36.20px;background:#f8cbad;"></div>
<span style="left:1179.13px;top:886.49px;font-size:22.40px;color:#000;transform:scaleX(1.1084);transform-origin:0 0;font-weight:bold;-webkit-text-stroke:0.45px #000;">213</span>
<div style="left:1179.60px;top:833.80px;width:33.00px;height:36.20px;background:#e2efda;"></div>
<span style="left:1188.39px;top:841.84px;font-size:22.40px;color:#000;transform:scaleX(1.2406);transform-origin:0 0;font-weight:bold;-webkit-text-stroke:0.45px #000;">0</span>
<span style="left:1167.60px;top:1507.44px;font-size:22.40px;color:#000;transform:scaleX(1.1435);transform-origin:0 0;font-weight:bold;-webkit-text-stroke:0.45px #000;">2029</span>
<div style="left:1446.85px;top:1249.71px;width:80.90px;height:36.20px;background:#dce6f2;"></div>
<span style="left:1456.12px;top:1257.75px;font-size:22.40px;color:#000;transform:scaleX(1.0980);transform-origin:0 0;font-weight:bold;-webkit-text-stroke:0.45px #000;">1,575</span>
<div style="left:1454.75px;top:977.01px;width:65.10px;height:36.20px;background:#b4b7ee;"></div>
<span style="left:1470.58px;top:985.05px;font-size:22.40px;color:#000;transform:scaleX(1.1049);transform-origin:0 0;font-weight:bold;-webkit-text-stroke:0.45px #000;">360</span>
<div style="left:1454.75px;top:880.05px;width:65.10px;height:36.20px;background:#f8cbad;"></div>
<span style="left:1470.58px;top:888.09px;font-size:22.40px;color:#000;transform:scaleX(1.1015);transform-origin:0 0;font-weight:bold;-webkit-text-stroke:0.45px #000;">329</span>
<div style="left:1470.80px;top:833.80px;width:33.00px;height:36.20px;background:#e2efda;"></div>
<span style="left:1479.59px;top:841.84px;font-size:22.40px;color:#000;transform:scaleX(1.2406);transform-origin:0 0;font-weight:bold;-webkit-text-stroke:0.45px #000;">0</span>
<span style="left:1458.80px;top:1507.44px;font-size:22.40px;color:#000;transform:scaleX(1.1462);transform-origin:0 0;font-weight:bold;-webkit-text-stroke:0.45px #000;">2030</span>
<svg width="2902" height="1762" viewBox="0 0 2902 1762" style="left:0;top:0;"><path d="M1644 889 L1697.8 889" stroke="#4bb2e7" stroke-width="4.1" stroke-linecap="round"/><circle cx="1670.6" cy="889" r="5.4" fill="#4bb2e7"/><path d="M1644 1020.6 L1697.8 1020.6" stroke="#4c50d0" stroke-width="4.1" stroke-linecap="round"/><rect x="1664.8" y="1014.8" width="11.6" height="11.6" fill="#4c50d0"/><path d="M1644 1152.9 L1697.8 1152.9" stroke="#f17c70" stroke-width="4.1" stroke-linecap="round"/><path d="M1670.6 1146.2 L1676.8 1158.2 L1664.4 1158.2 Z" fill="#f17c70"/><path d="M1644 1284.6 L1697.8 1284.6" stroke="#edb120" stroke-width="4.1" stroke-linecap="round"/><path d="M1665 1279 L1676.2 1290.2 M1676.2 1279 L1665 1290.2" stroke="#f4c64a" stroke-width="1.4"/><path d="M1644 1416.8 L1697.8 1416.8" stroke="#2bb3a3" stroke-width="4.1" stroke-linecap="round"/><rect x="1664.8" y="1411" width="11.6" height="11.6" fill="#55b56a"/></svg>
<span style="left:1702.69px;top:877.24px;font-size:22.40px;color:#000;transform:scaleX(1.0501);transform-origin:0 0;font-weight:bold;-webkit-text-stroke:0.45px #000;">Standard Laundry</span>
<span style="left:1701.90px;top:903.94px;font-size:22.40px;color:#000;transform:scaleX(1.0283);transform-origin:0 0;font-weight:bold;-webkit-text-stroke:0.45px #000;">Pounds</span>
<span style="left:1702.67px;top:1009.04px;font-size:22.40px;color:#000;transform:scaleX(1.0805);transform-origin:0 0;font-weight:bold;-webkit-text-stroke:0.45px #000;">Specialty Items</span>
<span style="left:1701.96px;top:1035.84px;font-size:22.40px;color:#000;transform:scaleX(1.0714);transform-origin:0 0;font-weight:bold;-webkit-text-stroke:0.45px #000;">Units</span>
<span style="left:1701.89px;top:1141.04px;font-size:22.40px;color:#000;transform:scaleX(1.0363);transform-origin:0 0;font-weight:bold;-webkit-text-stroke:0.45px #000;">Eco-Friendly Laundry</span>
<span style="left:1701.90px;top:1167.74px;font-size:22.40px;color:#000;transform:scaleX(1.0283);transform-origin:0 0;font-weight:bold;-webkit-text-stroke:0.45px #000;">Pounds</span>
<span style="left:1704.10px;top:1272.64px;font-size:22.40px;color:#000;font-weight:bold;">-</span>
<span style="left:1702.45px;top:1404.94px;font-size:22.40px;color:#000;transform:scaleX(1.0610);transform-origin:0 0;font-weight:bold;-webkit-text-stroke:0.45px #000;">Other Revenue</span>
<svg width="2902" height="1762" viewBox="0 0 2902 1762" style="left:0;top:0;"><path d="M2069.6 1487.30 L2846.8 1487.30" stroke="#58afd8" stroke-width="1.1"/><path d="M2069.6 1416.66 L2846.8 1416.66" stroke="#58afd8" stroke-width="1.1"/><path d="M2069.6 1346.02 L2846.8 1346.02" stroke="#58afd8" stroke-width="1.1"/><path d="M2069.6 1275.38 L2846.8 1275.38" stroke="#58afd8" stroke-width="1.1"/><path d="M2069.6 1204.74 L2846.8 1204.74" stroke="#58afd8" stroke-width="1.1"/><path d="M2069.6 1134.10 L2846.8 1134.10" stroke="#58afd8" stroke-width="1.1"/><path d="M2069.6 1063.46 L2846.8 1063.46" stroke="#58afd8" stroke-width="1.1"/><path d="M2069.6 992.82 L2846.8 992.82" stroke="#58afd8" stroke-width="1.1"/><path d="M2069.6 922.18 L2846.8 922.18" stroke="#58afd8" stroke-width="1.1"/><path d="M2069.6 851.54 L2846.8 851.54" stroke="#58afd8" stroke-width="1.1"/><polyline points="2146.2,1458.0 2301.9,1396.5 2457.6,1278.9 2613.3,1110.1 2769.0,931.0" fill="none" stroke="#4bb2e7" stroke-width="4.4" stroke-linejoin="round" stroke-linecap="round"/><circle cx="2146.2" cy="1458.0" r="7.3" fill="#4bb2e7"/><circle cx="2301.9" cy="1396.5" r="7.3" fill="#4bb2e7"/><circle cx="2457.6" cy="1278.9" r="7.3" fill="#4bb2e7"/><circle cx="2613.3" cy="1110.1" r="7.3" fill="#4bb2e7"/><circle cx="2769.0" cy="931.0" r="7.3" fill="#4bb2e7"/><polyline points="2146.2,1480.9 2301.9,1467.5 2457.6,1440.3 2613.3,1404.7 2769.0,1360.1" fill="none" stroke="#4c50d0" stroke-width="4.4" stroke-linejoin="round" stroke-linecap="round"/><rect x="2137.6" y="1472.3" width="17.2" height="17.2" fill="#4c50d0"/><rect x="2293.3" y="1458.9" width="17.2" height="17.2" fill="#4c50d0"/><rect x="2449.0" y="1431.7" width="17.2" height="17.2" fill="#4c50d0"/><rect x="2604.7" y="1396.1" width="17.2" height="17.2" fill="#4c50d0"/><rect x="2760.4" y="1351.5" width="17.2" height="17.2" fill="#4c50d0"/><polyline points="2146.2,1481.6 2301.9,1469.6 2457.6,1444.6 2613.3,1412.1 2769.0,1371.1" fill="none" stroke="#f17c70" stroke-width="4.4" stroke-linejoin="round" stroke-linecap="round"/><path d="M2146.2 1472.0 L2155.2 1489.0 L2137.2 1489.0 Z" fill="#f17c70"/><path d="M2301.9 1460.0 L2310.9 1477.0 L2292.9 1477.0 Z" fill="#f17c70"/><path d="M2457.6 1435.0 L2466.6 1452.0 L2448.6 1452.0 Z" fill="#f17c70"/><path d="M2613.3 1402.5 L2622.3 1419.5 L2604.3 1419.5 Z" fill="#f17c70"/><path d="M2769.0 1361.5 L2778.0 1378.5 L2760.0 1378.5 Z" fill="#f17c70"/><polyline points="2146.2,1487.3 2301.9,1487.3 2457.6,1487.3 2613.3,1487.3 2769.0,1487.3" fill="none" stroke="#2bb3a3" stroke-width="4.4" stroke-linejoin="round" stroke-linecap="round"/><rect x="2137.6" y="1478.7" width="17.2" height="17.2" fill="#2bb3a3"/><rect x="2293.3" y="1478.7" width="17.2" height="17.2" fill="#2bb3a3"/><rect x="2449.0" y="1478.7" width="17.2" height="17.2" fill="#2bb3a3"/><rect x="2604.7" y="1478.7" width="17.2" height="17.2" fill="#2bb3a3"/><rect x="2760.4" y="1478.7" width="17.2" height="17.2" fill="#2bb3a3"/></svg>
<span style="left:2032.35px;top:1476.24px;font-size:22.40px;color:#000;transform:scaleX(1.2780);transform-origin:0 0;font-weight:bold;-webkit-text-stroke:0.45px #000;">-</span>
<span style="left:1998.90px;top:1405.60px;font-size:22.40px;color:#000;transform:scaleX(1.1512);transform-origin:0 0;font-weight:bold;-webkit-text-stroke:0.45px #000;">200</span>
<span style="left:1999.42px;top:1334.96px;font-size:22.40px;color:#000;transform:scaleX(1.1369);transform-origin:0 0;font-weight:bold;-webkit-text-stroke:0.45px #000;">400</span>
<span style="left:1998.90px;top:1264.32px;font-size:22.40px;color:#000;transform:scaleX(1.1512);transform-origin:0 0;font-weight:bold;-webkit-text-stroke:0.45px #000;">600</span>
<span style="left:1999.03px;top:1193.68px;font-size:22.40px;color:#000;transform:scaleX(1.1476);transform-origin:0 0;font-weight:bold;-webkit-text-stroke:0.45px #000;">800</span>
<span style="left:1977.04px;top:1123.04px;font-size:22.40px;color:#000;transform:scaleX(1.1570);transform-origin:0 0;font-weight:bold;-webkit-text-stroke:0.45px #000;">1,000</span>
<span style="left:1977.04px;top:1052.40px;font-size:22.40px;color:#000;transform:scaleX(1.1570);transform-origin:0 0;font-weight:bold;-webkit-text-stroke:0.45px #000;">1,200</span>
<span style="left:1977.04px;top:981.76px;font-size:22.40px;color:#000;transform:scaleX(1.1570);transform-origin:0 0;font-weight:bold;-webkit-text-stroke:0.45px #000;">1,400</span>
<span style="left:1977.04px;top:911.12px;font-size:22.40px;color:#000;transform:scaleX(1.1570);transform-origin:0 0;font-weight:bold;-webkit-text-stroke:0.45px #000;">1,600</span>
<span style="left:1977.04px;top:840.48px;font-size:22.40px;color:#000;transform:scaleX(1.1570);transform-origin:0 0;font-weight:bold;-webkit-text-stroke:0.45px #000;">1,800</span>
<span style="left:2119.01px;top:1504.64px;font-size:22.40px;color:#000;transform:scaleX(1.1311);transform-origin:0 0;font-weight:bold;-webkit-text-stroke:0.45px #000;">2026</span>
<span style="left:2274.71px;top:1504.64px;font-size:22.40px;color:#000;transform:scaleX(1.1337);transform-origin:0 0;font-weight:bold;-webkit-text-stroke:0.45px #000;">2027</span>
<span style="left:2430.42px;top:1504.64px;font-size:22.40px;color:#000;transform:scaleX(1.1285);transform-origin:0 0;font-weight:bold;-webkit-text-stroke:0.45px #000;">2028</span>
<span style="left:2586.11px;top:1504.64px;font-size:22.40px;color:#000;transform:scaleX(1.1311);transform-origin:0 0;font-weight:bold;-webkit-text-stroke:0.45px #000;">2029</span>
<span style="left:2741.81px;top:1504.64px;font-size:22.40px;color:#000;transform:scaleX(1.1337);transform-origin:0 0;font-weight:bold;-webkit-text-stroke:0.45px #000;">2030</span>
<div style="left:83.00px;top:1535.30px;width:1755.60px;height:41.70px;background:#4c50d0;"></div>
<div style="left:1838.60px;top:1535.30px;width:1.40px;height:41.70px;background:#8f93e6;"></div>
<div style="left:1840.00px;top:1535.30px;width:1007.40px;height:41.70px;background:#4c50d0;"></div>
<span style="left:699.26px;top:1540.21px;font-size:34.60px;color:#fff;transform:scaleX(1.0409);transform-origin:0 0;font-weight:bold;-webkit-text-stroke:0.55px #fff;">Revenue</span>
<span style="left:858.40px;top:1540.21px;font-size:34.60px;color:#fff;transform:scaleX(1.0653);transform-origin:0 0;font-weight:bold;-webkit-text-stroke:0.55px #fff;">Depth</span>
<span style="left:970.94px;top:1540.21px;font-size:34.60px;color:#fff;transform:scaleX(1.1923);transform-origin:0 0;font-weight:bold;-webkit-text-stroke:0.55px #fff;">($'000)</span>
<span style="left:1107.50px;top:1540.21px;font-size:34.60px;color:#fff;transform:scaleX(1.5188);transform-origin:0 0;font-weight:bold;-webkit-text-stroke:0.55px #fff;">-</span>
<span style="left:1134.41px;top:1540.21px;font-size:34.60px;color:#fff;transform:scaleX(1.1467);transform-origin:0 0;font-weight:bold;-webkit-text-stroke:0.55px #fff;">2026</span>
<span style="left:2056.95px;top:1540.21px;font-size:34.60px;color:#fff;transform:scaleX(1.0462);transform-origin:0 0;font-weight:bold;-webkit-text-stroke:0.55px #fff;">Monthly</span>
<span style="left:2206.60px;top:1540.21px;font-size:34.60px;color:#fff;transform:scaleX(1.0669);transform-origin:0 0;font-weight:bold;-webkit-text-stroke:0.55px #fff;">Run-Rate</span>
<span style="left:2379.04px;top:1540.21px;font-size:34.60px;color:#fff;transform:scaleX(1.1904);transform-origin:0 0;font-weight:bold;-webkit-text-stroke:0.55px #fff;">($'000)</span>
<span style="left:2516.22px;top:1540.21px;font-size:34.60px;color:#fff;transform:scaleX(1.4281);transform-origin:0 0;font-weight:bold;-webkit-text-stroke:0.55px #fff;">-</span>
<span style="left:2542.11px;top:1540.21px;font-size:34.60px;color:#fff;transform:scaleX(1.1467);transform-origin:0 0;font-weight:bold;-webkit-text-stroke:0.55px #fff;">2026</span>
<div style="left:2541.80px;top:1577.00px;width:305.60px;height:29.40px;background:#fff36c;border:1.6px solid #d2d2de;box-sizing:border-box;"></div>
<span style="left:2667.32px;top:1580.64px;font-size:22.40px;color:#1a1a1a;transform:scaleX(1.1187);transform-origin:0 0;font-weight:bold;">2026</span>
<div style="left:83.00px;top:1617.90px;width:1494.50px;height:1.30px;background:#58afd8;"></div>
<span style="left:261.03px;top:1636.24px;font-size:22.40px;color:#000;transform:scaleX(1.1527);transform-origin:0 0;font-weight:bold;-webkit-text-stroke:0.45px #000;">82.5</span>
<div style="left:1616.00px;top:1646.40px;width:12.20px;height:12.20px;background:#4bb2e7;"></div>
<span style="left:1632.29px;top:1640.24px;font-size:22.40px;color:#000;transform:scaleX(1.0501);transform-origin:0 0;font-weight:bold;-webkit-text-stroke:0.45px #000;">Standard Laundry</span>
<span style="left:1631.50px;top:1666.94px;font-size:22.40px;color:#000;transform:scaleX(1.0283);transform-origin:0 0;font-weight:bold;-webkit-text-stroke:0.45px #000;">Pounds</span>
<div style="left:2288.60px;top:1660.60px;width:80.00px;height:20.00px;background:#fff;border:1.7px solid #333;box-sizing:border-box;"></div>
<div style="left:2380.20px;top:1657.20px;width:80.20px;height:20.00px;background:#fff;border:1.7px solid #333;box-sizing:border-box;"></div>
<span style="left:2394.40px;top:1664.44px;font-size:22.40px;color:#000;transform:scaleX(1.0077);transform-origin:0 0;font-weight:bold;">0.0%</span>
</div></div>
<div style="left:11.00px;top:1670.30px;width:2880.00px;height:47.50px;background:#0b0b0b;"></div>
<div style="left:11.00px;top:1717.50px;width:2880.00px;height:1.20px;background:#333;"></div>
<div style="left:11.00px;top:1718.70px;width:2880.00px;height:32.30px;background:#151515;"></div>
<div style="left:177.30px;top:1675.90px;width:88.60px;height:35.90px;background:#ffee68;border-radius:6px;"></div>
<span style="left:189.95px;top:1685.86px;font-size:20.60px;color:#1c1c1c;transform:scaleX(1.0042);transform-origin:0 0;">Payroll</span>
<div style="left:272.10px;top:1680.50px;width:1.30px;height:27.20px;background:#5a5a5a;"></div>
<div style="left:279.10px;top:1675.90px;width:86.80px;height:35.90px;background:#ffee68;border-radius:6px;"></div>
<span style="left:291.79px;top:1685.86px;font-size:20.60px;color:#1c1c1c;transform:scaleX(0.8817);transform-origin:0 0;">CAPEX</span>
<div style="left:372.10px;top:1680.50px;width:1.30px;height:27.20px;background:#5a5a5a;"></div>
<div style="left:379.10px;top:1675.90px;width:112.90px;height:35.90px;background:#ffee68;border-radius:6px;"></div>
<span style="left:391.47px;top:1685.86px;font-size:20.60px;color:#1c1c1c;transform:scaleX(0.9967);transform-origin:0 0;">CapTable</span>
<div style="left:498.20px;top:1680.50px;width:1.30px;height:27.20px;background:#5a5a5a;"></div>
<div style="left:505.30px;top:1675.90px;width:89.50px;height:35.90px;background:#ffee68;border-radius:6px;"></div>
<span style="left:517.55px;top:1685.86px;font-size:20.60px;color:#1c1c1c;transform:scaleX(1.0179);transform-origin:0 0;">Capital</span>
<div style="left:601.00px;top:1680.50px;width:1.30px;height:27.20px;background:#5a5a5a;"></div>
<div style="left:608.40px;top:1675.90px;width:41.60px;height:35.90px;background:#4ab1e8;border-radius:6px;"></div>
<span style="left:619.93px;top:1685.86px;font-size:20.60px;color:#1c1c1c;transform:scaleX(0.8990);transform-origin:0 0;">IS</span>
<div style="left:656.20px;top:1680.50px;width:1.30px;height:27.20px;background:#5a5a5a;"></div>
<div style="left:663.00px;top:1675.90px;width:47.80px;height:35.90px;background:#4ab1e8;border-radius:6px;"></div>
<span style="left:675.12px;top:1685.86px;font-size:20.60px;color:#1c1c1c;transform:scaleX(0.8534);transform-origin:0 0;">CF</span>
<div style="left:717.00px;top:1680.50px;width:1.30px;height:27.20px;background:#5a5a5a;"></div>
<div style="left:724.40px;top:1675.90px;width:47.20px;height:35.90px;background:#4ab1e8;border-radius:6px;"></div>
<span style="left:735.98px;top:1685.86px;font-size:20.60px;color:#1c1c1c;transform:scaleX(0.8621);transform-origin:0 0;">BS</span>
<div style="left:777.80px;top:1680.50px;width:1.30px;height:27.20px;background:#5a5a5a;"></div>
<div style="left:785.30px;top:1675.90px;width:114.60px;height:35.90px;background:#4ab1e8;border-radius:6px;"></div>
<span style="left:797.39px;top:1685.86px;font-size:20.60px;color:#1c1c1c;transform:scaleX(0.9842);transform-origin:0 0;">Scenarios</span>
<div style="left:906.10px;top:1680.50px;width:1.30px;height:27.20px;background:#5a5a5a;"></div>
<div style="left:913.00px;top:1675.90px;width:114.60px;height:35.90px;background:#4ab1e8;border-radius:6px;"></div>
<span style="left:926.09px;top:1685.86px;font-size:20.60px;color:#1c1c1c;transform:scaleX(1.0637);transform-origin:0 0;">Valuation</span>
<div style="left:1033.80px;top:1680.50px;width:1.30px;height:27.20px;background:#5a5a5a;"></div>
<div style="left:1041.00px;top:1675.90px;width:113.80px;height:35.90px;background:#4ab1e8;border-radius:6px;"></div>
<span style="left:1053.88px;top:1685.86px;font-size:20.60px;color:#1c1c1c;transform:scaleX(0.9949);transform-origin:0 0;">Summary</span>
<div style="left:1161.00px;top:1680.50px;width:1.30px;height:27.20px;background:#5a5a5a;"></div>
<div style="left:1168.00px;top:1675.90px;width:47.60px;height:35.90px;background:#4ab1e8;border-radius:6px;"></div>
<span style="left:1179.77px;top:1685.86px;font-size:20.60px;color:#1c1c1c;transform:scaleX(0.8666);transform-origin:0 0;">BE</span>
<div style="left:1221.80px;top:1680.50px;width:1.30px;height:27.20px;background:#5a5a5a;"></div>
<div style="left:1229.20px;top:1675.90px;width:71.60px;height:35.90px;background:#4ab1e8;border-radius:6px;"></div>
<span style="left:1240.88px;top:1685.86px;font-size:20.60px;color:#1c1c1c;transform:scaleX(0.9241);transform-origin:0 0;">ROIC</span>
<div style="left:1307.00px;top:1680.50px;width:1.30px;height:27.20px;background:#5a5a5a;"></div>
<div style="left:1314.00px;top:1675.90px;width:85.00px;height:35.90px;background:#4ab1e8;border-radius:6px;"></div>
<span style="left:1326.18px;top:1685.86px;font-size:20.60px;color:#1c1c1c;transform:scaleX(0.9912);transform-origin:0 0;">Charts</span>
<div style="left:1405.20px;top:1680.50px;width:1.30px;height:27.20px;background:#5a5a5a;"></div>
<div style="left:1412.30px;top:1675.90px;width:63.40px;height:35.90px;background:#4ab1e8;border-radius:6px;"></div>
<span style="left:1423.69px;top:1685.86px;font-size:20.60px;color:#1c1c1c;transform:scaleX(0.9149);transform-origin:0 0;">KPIs</span>
<div style="left:1481.90px;top:1680.50px;width:1.30px;height:27.20px;background:#5a5a5a;"></div>
<div style="left:1489.00px;top:1675.90px;width:169.00px;height:35.90px;background:#4ab1e8;border-radius:6px;"></div>
<span style="left:1500.49px;top:1685.86px;font-size:20.60px;color:#1c1c1c;transform:scaleX(0.9791);transform-origin:0 0;">Sources &amp; Uses</span>
<div style="left:1664.20px;top:1680.50px;width:1.30px;height:27.20px;background:#5a5a5a;"></div>
<div style="left:1671.30px;top:1675.90px;width:82.50px;height:35.90px;background:#4ab1e8;border-radius:6px;"></div>
<span style="left:1682.75px;top:1685.86px;font-size:20.60px;color:#1c1c1c;">Ratios</span>
<div style="left:1760.00px;top:1680.50px;width:1.30px;height:27.20px;background:#5a5a5a;"></div>
<div style="left:1767.00px;top:1675.90px;width:95.80px;height:35.90px;background:#4ab1e8;border-radius:6px;"></div>
<span style="left:1778.70px;top:1685.86px;font-size:20.60px;color:#1c1c1c;transform:scaleX(1.0336);transform-origin:0 0;">DuPont</span>
<div style="left:1869.00px;top:1680.50px;width:1.30px;height:27.20px;background:#5a5a5a;"></div>
<div style="left:1875.90px;top:1668.00px;width:151.60px;height:43.80px;background:#fff;border-radius:0 0 6px 6px;background:linear-gradient(#ffffff 0%,#ffffff 30%,#d3e7f8 100%);"></div>
<span style="left:1887.99px;top:1680.36px;font-size:20.60px;color:#222;transform:scaleX(1.0067);transform-origin:0 0;">Top_Revenue</span>
<div style="left:1888.40px;top:1704.60px;width:126.60px;height:3.30px;background:#1f8a4d;"></div>
<div style="left:2033.00px;top:1680.50px;width:1.30px;height:27.20px;background:#5a5a5a;"></div>
<div style="left:2040px;top:1675.9px;width:31.8px;height:35.9px;overflow:hidden;">
<div style="left:0.00px;top:0.00px;width:60.00px;height:35.90px;background:#4ab1e8;border-radius:6px;"></div>
<span style="left:14.39px;top:9.96px;font-size:20.60px;color:#222;">To</span>
</div>
<svg width="2902" height="1762" viewBox="0 0 2902 1762" style="left:0;top:0;"><path d="M54.3 1686 L47 1693 L54.3 1700" fill="none" stroke="#d0d0d0" stroke-width="1.6" stroke-linecap="round" stroke-linejoin="round"/><path d="M95.4 1686 L102.7 1693 L95.4 1700" fill="none" stroke="#d0d0d0" stroke-width="1.6" stroke-linecap="round" stroke-linejoin="round"/><circle cx="140.3" cy="1693" r="1.9" fill="#d0d0d0"/><circle cx="146.7" cy="1693" r="1.9" fill="#d0d0d0"/><circle cx="153.1" cy="1693" r="1.9" fill="#d0d0d0"/><circle cx="2089.2" cy="1692.6" r="1.9" fill="#d0d0d0"/><circle cx="2095.5" cy="1692.6" r="1.9" fill="#d0d0d0"/><circle cx="2101.8" cy="1692.6" r="1.9" fill="#d0d0d0"/><path d="M2135 1692.6 L2152 1692.6 M2143.5 1684.2 L2143.5 1701" stroke="#d8d8d8" stroke-width="1.6"/><rect x="2190.4" y="1687.3999999999999" width="2.9" height="2.9" fill="#d0d0d0"/><rect x="2190.4" y="1693.1999999999998" width="2.9" height="2.9" fill="#d0d0d0"/><rect x="2190.4" y="1699.0" width="2.9" height="2.9" fill="#d0d0d0"/><rect x="2216" y="1680.7" width="644" height="25" rx="12.5" fill="#171717"/><path d="M2224 1692.6 L2234 1686.4 L2234 1698.8 Z" fill="#9a9a9a"/><path d="M2852 1692.6 L2842 1686.4 L2842 1698.8 Z" fill="#9a9a9a"/><rect x="2242.3" y="1687.3" width="508" height="11.8" rx="5.9" fill="#9e9e9e"/><rect x="2863.5" y="279" width="24" height="24" rx="12" fill="#1a1a1a"/><path d="M2875.7 285.8 L2882 294.5 L2869.4 294.5 Z" fill="#9a9a9a"/><rect x="2869.7" y="304.5" width="12" height="562" rx="6" fill="#9e9e9e"/><rect x="2863.5" y="1646" width="24" height="24" rx="12" fill="#1a1a1a"/><path d="M2875.7 1664 L2882 1655.3 L2869.4 1655.3 Z" fill="#9a9a9a"/><g fill="none" stroke="#e0e0e0" stroke-width="1.5"><path d="M113 1744.6 L100 1744.6 L100 1727.2 L120.2 1727.2 L120.2 1734"/><path d="M100 1731 L120.2 1731 M103 1735.2 L109 1735.2 M103 1739 L107.5 1739"/>
<circle cx="114.3" cy="1739.6" r="5.6"/></g><circle cx="114.3" cy="1739.6" r="2.6" fill="#e0e0e0"/><g fill="none" stroke="#e0e0e0" stroke-width="1.5" stroke-linecap="round" stroke-linejoin="round"><circle cx="156" cy="1727.6" r="2.3"/>
<path d="M147.5 1730 L153.3 1733 L158.7 1733 L164.5 1730 M153.3 1733 L153.3 1738 L150 1745.5 M158.7 1733 L158.7 1737"/>
<path d="M158.5 1738.5 L166.5 1746.2 M166.5 1738.5 L158.5 1746.2"/></g><rect x="2445" y="1719" width="60" height="32" fill="#262626"/><g fill="none" stroke="#e0e0e0" stroke-width="1.5"><rect x="2465.2" y="1725.4" width="18.4" height="18"/><path d="M2471.3 1725.4 L2471.3 1743.4 M2477.5 1725.4 L2477.5 1743.4 M2465.2 1731.4 L2483.6 1731.4 M2465.2 1737.4 L2483.6 1737.4"/></g><g fill="none" stroke="#e0e0e0" stroke-width="1.5"><rect x="2525.3" y="1725.4" width="19.4" height="18"/><rect x="2530" y="1729.6" width="10" height="10"/><path d="M2532.5 1733 L2537.5 1733 M2532.5 1736.2 L2537.5 1736.2"/></g><g fill="none" stroke="#e0e0e0" stroke-width="1.5"><rect x="2585.2" y="1725.4" width="19.4" height="18"/><path d="M2590.5 1725.4 L2590.5 1734 L2598.2 1734 L2598.2 1725.4"/></g><path d="M2633 1734.6 L2643.5 1734.6" stroke="#e0e0e0" stroke-width="1.3"/><path d="M2653 1734.6 L2800.5 1734.6" stroke="#8a8a8a" stroke-width="1.3"/><path d="M2727.6 1730 L2727.6 1739" stroke="#bdbdbd" stroke-width="1.5"/><rect x="2733" y="1726" width="7.4" height="17.4" fill="#9e9e9e"/><path d="M2809.5 1734.6 L2820 1734.6 M2814.7 1729.4 L2814.7 1739.8" stroke="#e0e0e0" stroke-width="1.3"/></svg>
<span style="left:26.10px;top:1727.09px;font-size:16.20px;color:#f0f0f0;transform:scaleX(0.9226);transform-origin:0 0;">Ready</span>
<span style="left:172.81px;top:1727.09px;font-size:16.20px;color:#fff;transform:scaleX(0.9734);transform-origin:0 0;font-weight:bold;">Accessibility: Investigate</span>
<span style="left:2838.81px;top:1727.29px;font-size:16.20px;color:#f0f0f0;transform:scaleX(0.9826);transform-origin:0 0;">140%</span>
</body></html>
